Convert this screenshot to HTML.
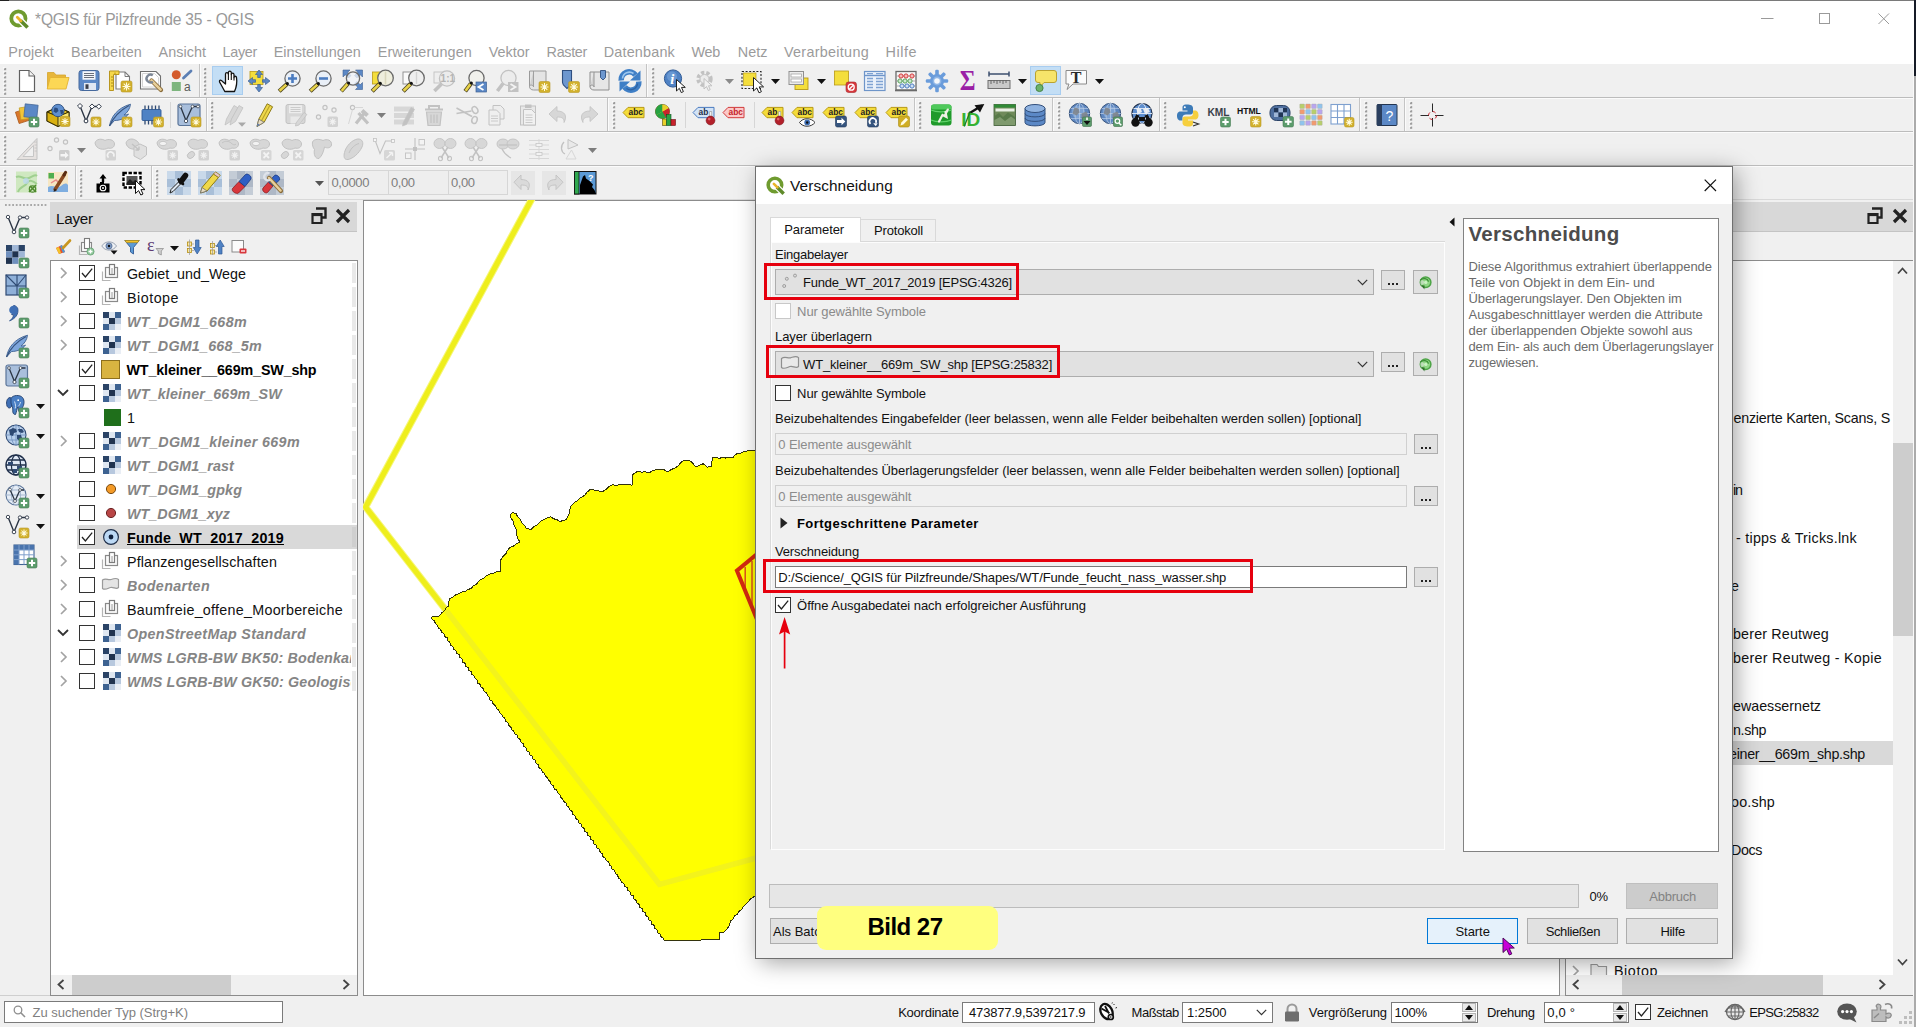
<!DOCTYPE html>
<html lang="de"><head><meta charset="utf-8"><title>QGIS</title>
<style>
html,body{margin:0;padding:0;}
html{overflow:hidden;background:#f0f0f0;}
body{width:1916px;height:1027px;overflow:hidden;background:#f0f0f0;position:relative;font-family:"Liberation Sans",sans-serif;}
div,svg{position:absolute;box-sizing:border-box;}
.t{white-space:pre;line-height:1;}
svg{overflow:visible;}
</style></head><body>
<div style="left:0px;top:0px;width:1916px;height:64px;background:#fff;"></div>
<div style="left:0px;top:0px;width:1916px;height:1px;background:#7a7a7a;"></div>
<div style="left:0px;top:0px;width:9px;height:1px;background:#222;"></div>
<svg style="left:9px;top:9px;" width="20" height="20" viewBox="0 0 20 20"><circle cx="9.4" cy="9.4" r="7.1" fill="none" stroke="#6f9b2f" stroke-width="3.8"/><path d="M10.5 10.5L19 19" stroke="#fff" stroke-width="6.2"/><path d="M11.5 11.5L18.6 18.6" stroke="#5f8a2a" stroke-width="3.6" stroke-linecap="butt"/><path d="M8.3 8.3L12 12" stroke="#e9b42a" stroke-width="2.8" stroke-linecap="round"/></svg>
<div class="t" style="left:35.00px;top:12px;font-size:15.6px;color:#999;letter-spacing:-0.179px;">*QGIS für Pilzfreunde 35 - QGIS</div>
<svg style="left:1761px;top:12px;" width="13" height="12" viewBox="0 0 13 12"><path d="M0 6.5H12.5" stroke="#9a9a9a" stroke-width="1" fill="none"/></svg>
<svg style="left:1819px;top:13px;" width="12" height="12" viewBox="0 0 12 12"><rect x="0.5" y="0.5" width="10" height="10" stroke="#9a9a9a" stroke-width="1" fill="none"/></svg>
<svg style="left:1878px;top:13px;" width="12" height="12" viewBox="0 0 12 12"><path d="M0.5 0.5L11 11M11 0.5L0.5 11" stroke="#9a9a9a" stroke-width="1" fill="none"/></svg>
<div class="t" style="left:8.30px;top:45px;font-size:14.4px;color:#9b9b9b;letter-spacing:0.112px;">Projekt</div>
<div class="t" style="left:71.00px;top:45px;font-size:14.4px;color:#9b9b9b;letter-spacing:0.135px;">Bearbeiten</div>
<div class="t" style="left:158.60px;top:45px;font-size:14.4px;color:#9b9b9b;letter-spacing:0.025px;">Ansicht</div>
<div class="t" style="left:222.50px;top:45px;font-size:14.4px;color:#9b9b9b;letter-spacing:-0.304px;">Layer</div>
<div class="t" style="left:273.70px;top:45px;font-size:14.4px;color:#9b9b9b;letter-spacing:0.064px;">Einstellungen</div>
<div class="t" style="left:377.70px;top:45px;font-size:14.4px;color:#9b9b9b;letter-spacing:0.111px;">Erweiterungen</div>
<div class="t" style="left:488.70px;top:45px;font-size:14.4px;color:#9b9b9b;">Vektor</div>
<div class="t" style="left:546.60px;top:45px;font-size:14.4px;color:#9b9b9b;letter-spacing:-0.335px;">Raster</div>
<div class="t" style="left:603.70px;top:45px;font-size:14.4px;color:#9b9b9b;letter-spacing:0.183px;">Datenbank</div>
<div class="t" style="left:691.40px;top:45px;font-size:14.4px;color:#9b9b9b;letter-spacing:-0.250px;">Web</div>
<div class="t" style="left:737.80px;top:45px;font-size:14.4px;color:#9b9b9b;letter-spacing:0.048px;">Netz</div>
<div class="t" style="left:784.00px;top:45px;font-size:14.4px;color:#9b9b9b;letter-spacing:0.278px;">Verarbeitung</div>
<div class="t" style="left:885.50px;top:45px;font-size:14.4px;color:#9b9b9b;letter-spacing:0.539px;">Hilfe</div>
<div style="left:0px;top:64px;width:1916px;height:136px;background:#f0f0f0;"></div>
<div style="left:0px;top:97px;width:1916px;height:1px;background:#bcbcbc;"></div>
<div style="left:0px;top:98px;width:1916px;height:1px;background:#fbfbfb;"></div>
<div style="left:0px;top:131px;width:1916px;height:1px;background:#bcbcbc;"></div>
<div style="left:0px;top:132px;width:1916px;height:1px;background:#fbfbfb;"></div>
<div style="left:0px;top:165px;width:1916px;height:1px;background:#bcbcbc;"></div>
<div style="left:0px;top:166px;width:1916px;height:1px;background:#fbfbfb;"></div>
<div style="left:0px;top:199px;width:1916px;height:1px;background:#d9d9d9;"></div>
<div style="left:0px;top:200px;width:50px;height:796px;background:#f0f0f0;"></div>
<div style="left:0px;top:995px;width:1916px;height:1px;background:#cfcfcf;"></div>
<div style="left:50px;top:202px;width:307px;height:30px;background:#d8d8d8;"></div>
<div style="left:50px;top:231px;width:307px;height:1px;background:#c4c4c4;"></div>
<div class="t" style="left:56.00px;top:211px;font-size:15.2px;color:#111;letter-spacing:-0.205px;">Layer</div>
<svg style="left:311px;top:207px;" width="16" height="18" viewBox="0 0 16 18"><path d="M5 1.5H14.5V10.5H11" fill="none" stroke="#222" stroke-width="2.4"/><path d="M1.5 7H10.5V16H1.5Z" fill="none" stroke="#222" stroke-width="2.2"/><path d="M1.5 7.6H10.5" stroke="#222" stroke-width="3"/></svg>
<svg style="left:335px;top:208px;" width="16" height="16" viewBox="0 0 16 16"><path d="M2 2L14 14M14 2L2 14" stroke="#222" stroke-width="3.2" fill="none"/></svg>
<div style="left:50px;top:260px;width:308px;height:735.5px;background:#fff;border:1px solid #8c8c8c;"></div>
<div style="left:77px;top:525px;width:280px;height:24px;background:#d9d9d9;"></div>
<svg style="left:60px;top:267px;" width="8" height="12" viewBox="0 0 8 12"><path d="M1 1L6 6L1 11" fill="none" stroke="#a3a3a3" stroke-width="1.7"/></svg>
<svg style="left:79px;top:265px;" width="16" height="16" viewBox="0 0 16 16"><rect x="0.5" y="0.5" width="15" height="15" fill="#fff" stroke="#333" stroke-width="1"/><path d="M3 8.0L6.4 12L13.2 3.6" fill="none" stroke="#222" stroke-width="1.3"/></svg>
<svg style="left:101px;top:263px;" width="18" height="19" viewBox="0 0 18 19"><path d="M1.5 8.5V17.5H9.5" fill="none" stroke="#b5b5b5" stroke-width="1.2"/><rect x="4.5" y="4.5" width="12" height="10" fill="#fafafa" stroke="#8a8a8a" stroke-width="1.2"/><rect x="8.5" y="1.5" width="5" height="10" fill="#fff" stroke="#7b7b7b" stroke-width="1.2"/><path d="M11 5V11" stroke="#9a9a9a" stroke-width="1"/></svg>
<div class="t" style="left:127.00px;top:267px;font-size:14.3px;color:#111;">Gebiet_und_Wege</div>
<svg style="left:60px;top:291px;" width="8" height="12" viewBox="0 0 8 12"><path d="M1 1L6 6L1 11" fill="none" stroke="#a3a3a3" stroke-width="1.7"/></svg>
<svg style="left:79px;top:289px;" width="16" height="16" viewBox="0 0 16 16"><rect x="0.5" y="0.5" width="15" height="15" fill="#fff" stroke="#333" stroke-width="1"/></svg>
<svg style="left:101px;top:287px;" width="18" height="19" viewBox="0 0 18 19"><path d="M1.5 8.5V17.5H9.5" fill="none" stroke="#b5b5b5" stroke-width="1.2"/><rect x="4.5" y="4.5" width="12" height="10" fill="#fafafa" stroke="#8a8a8a" stroke-width="1.2"/><rect x="8.5" y="1.5" width="5" height="10" fill="#fff" stroke="#7b7b7b" stroke-width="1.2"/><path d="M11 5V11" stroke="#9a9a9a" stroke-width="1"/></svg>
<div class="t" style="left:127.00px;top:291px;font-size:14.3px;color:#111;letter-spacing:0.500px;">Biotope</div>
<svg style="left:60px;top:315px;" width="8" height="12" viewBox="0 0 8 12"><path d="M1 1L6 6L1 11" fill="none" stroke="#a3a3a3" stroke-width="1.7"/></svg>
<svg style="left:79px;top:313px;" width="16" height="16" viewBox="0 0 16 16"><rect x="0.5" y="0.5" width="15" height="15" fill="#fff" stroke="#333" stroke-width="1"/></svg>
<svg style="left:103px;top:312px;" width="18" height="18" viewBox="0 0 18 18"><rect x="0" y="0" width="6" height="6" fill="#2a4366"/><rect x="6" y="0" width="6" height="6" fill="#dfe7f1"/><rect x="12" y="0" width="6" height="6" fill="#3d6291"/><rect x="0" y="6" width="6" height="6" fill="#dfe7f1"/><rect x="6" y="6" width="6" height="6" fill="#20334f"/><rect x="12" y="6" width="6" height="6" fill="#b7c8de"/><rect x="0" y="12" width="6" height="6" fill="#3d6291"/><rect x="6" y="12" width="6" height="6" fill="#b7c8de"/><rect x="12" y="12" width="6" height="6" fill="#e9eef5"/></svg>
<div class="t" style="left:127.00px;top:315px;font-size:14.3px;color:#858585;font-weight:700;font-style:italic;letter-spacing:0.331px;">WT_DGM1_668m</div>
<svg style="left:60px;top:339px;" width="8" height="12" viewBox="0 0 8 12"><path d="M1 1L6 6L1 11" fill="none" stroke="#a3a3a3" stroke-width="1.7"/></svg>
<svg style="left:79px;top:337px;" width="16" height="16" viewBox="0 0 16 16"><rect x="0.5" y="0.5" width="15" height="15" fill="#fff" stroke="#333" stroke-width="1"/></svg>
<svg style="left:103px;top:336px;" width="18" height="18" viewBox="0 0 18 18"><rect x="0" y="0" width="6" height="6" fill="#2a4366"/><rect x="6" y="0" width="6" height="6" fill="#dfe7f1"/><rect x="12" y="0" width="6" height="6" fill="#3d6291"/><rect x="0" y="6" width="6" height="6" fill="#dfe7f1"/><rect x="6" y="6" width="6" height="6" fill="#20334f"/><rect x="12" y="6" width="6" height="6" fill="#b7c8de"/><rect x="0" y="12" width="6" height="6" fill="#3d6291"/><rect x="6" y="12" width="6" height="6" fill="#b7c8de"/><rect x="12" y="12" width="6" height="6" fill="#e9eef5"/></svg>
<div class="t" style="left:127.00px;top:339px;font-size:14.3px;color:#858585;font-weight:700;font-style:italic;letter-spacing:0.219px;">WT_DGM1_668_5m</div>
<svg style="left:79px;top:361px;" width="16" height="16" viewBox="0 0 16 16"><rect x="0.5" y="0.5" width="15" height="15" fill="#fff" stroke="#333" stroke-width="1"/><path d="M3 8.0L6.4 12L13.2 3.6" fill="none" stroke="#222" stroke-width="1.3"/></svg>
<div style="left:101px;top:360px;width:19px;height:19px;background:#d9b441;border:1px solid #8c6f1e;"></div>
<div class="t" style="left:126.50px;top:363px;font-size:14.3px;color:#000;font-weight:700;letter-spacing:-0.136px;">WT_kleiner__669m_SW_shp</div>
<svg style="left:57px;top:389px;" width="12" height="8" viewBox="0 0 12 8"><path d="M1 1L6 6L11 1" fill="none" stroke="#333" stroke-width="1.8"/></svg>
<svg style="left:79px;top:385px;" width="16" height="16" viewBox="0 0 16 16"><rect x="0.5" y="0.5" width="15" height="15" fill="#fff" stroke="#333" stroke-width="1"/></svg>
<svg style="left:103px;top:384px;" width="18" height="18" viewBox="0 0 18 18"><rect x="0" y="0" width="6" height="6" fill="#2a4366"/><rect x="6" y="0" width="6" height="6" fill="#dfe7f1"/><rect x="12" y="0" width="6" height="6" fill="#3d6291"/><rect x="0" y="6" width="6" height="6" fill="#dfe7f1"/><rect x="6" y="6" width="6" height="6" fill="#20334f"/><rect x="12" y="6" width="6" height="6" fill="#b7c8de"/><rect x="0" y="12" width="6" height="6" fill="#3d6291"/><rect x="6" y="12" width="6" height="6" fill="#b7c8de"/><rect x="12" y="12" width="6" height="6" fill="#e9eef5"/></svg>
<div class="t" style="left:127.00px;top:387px;font-size:14.3px;color:#858585;font-weight:700;font-style:italic;letter-spacing:0.177px;">WT_kleiner_669m_SW</div>
<div style="left:104px;top:409px;width:17px;height:17px;background:#1f6f1b;"></div>
<div class="t" style="left:127.00px;top:411px;font-size:14.3px;color:#111;">1</div>
<svg style="left:60px;top:435px;" width="8" height="12" viewBox="0 0 8 12"><path d="M1 1L6 6L1 11" fill="none" stroke="#a3a3a3" stroke-width="1.7"/></svg>
<svg style="left:79px;top:433px;" width="16" height="16" viewBox="0 0 16 16"><rect x="0.5" y="0.5" width="15" height="15" fill="#fff" stroke="#333" stroke-width="1"/></svg>
<svg style="left:103px;top:432px;" width="18" height="18" viewBox="0 0 18 18"><rect x="0" y="0" width="6" height="6" fill="#2a4366"/><rect x="6" y="0" width="6" height="6" fill="#dfe7f1"/><rect x="12" y="0" width="6" height="6" fill="#3d6291"/><rect x="0" y="6" width="6" height="6" fill="#dfe7f1"/><rect x="6" y="6" width="6" height="6" fill="#20334f"/><rect x="12" y="6" width="6" height="6" fill="#b7c8de"/><rect x="0" y="12" width="6" height="6" fill="#3d6291"/><rect x="6" y="12" width="6" height="6" fill="#b7c8de"/><rect x="12" y="12" width="6" height="6" fill="#e9eef5"/></svg>
<div class="t" style="left:127.00px;top:435px;font-size:14.3px;color:#858585;font-weight:700;font-style:italic;letter-spacing:0.345px;">WT_DGM1_kleiner 669m</div>
<svg style="left:79px;top:457px;" width="16" height="16" viewBox="0 0 16 16"><rect x="0.5" y="0.5" width="15" height="15" fill="#fff" stroke="#333" stroke-width="1"/></svg>
<svg style="left:103px;top:456px;" width="18" height="18" viewBox="0 0 18 18"><rect x="0" y="0" width="6" height="6" fill="#2a4366"/><rect x="6" y="0" width="6" height="6" fill="#dfe7f1"/><rect x="12" y="0" width="6" height="6" fill="#3d6291"/><rect x="0" y="6" width="6" height="6" fill="#dfe7f1"/><rect x="6" y="6" width="6" height="6" fill="#20334f"/><rect x="12" y="6" width="6" height="6" fill="#b7c8de"/><rect x="0" y="12" width="6" height="6" fill="#3d6291"/><rect x="6" y="12" width="6" height="6" fill="#b7c8de"/><rect x="12" y="12" width="6" height="6" fill="#e9eef5"/></svg>
<div class="t" style="left:127.00px;top:459px;font-size:14.3px;color:#858585;font-weight:700;font-style:italic;letter-spacing:0.109px;">WT_DGM1_rast</div>
<svg style="left:79px;top:481px;" width="16" height="16" viewBox="0 0 16 16"><rect x="0.5" y="0.5" width="15" height="15" fill="#fff" stroke="#333" stroke-width="1"/></svg>
<svg style="left:104px;top:482px;" width="14" height="14" viewBox="0 0 14 14"><circle cx="7" cy="7" r="4.6" fill="#f39a27" stroke="#7a4a10" stroke-width="1"/></svg>
<div class="t" style="left:127.00px;top:483px;font-size:14.3px;color:#858585;font-weight:700;font-style:italic;letter-spacing:0.116px;">WT_DGM1_gpkg</div>
<svg style="left:79px;top:505px;" width="16" height="16" viewBox="0 0 16 16"><rect x="0.5" y="0.5" width="15" height="15" fill="#fff" stroke="#333" stroke-width="1"/></svg>
<svg style="left:104px;top:506px;" width="14" height="14" viewBox="0 0 14 14"><circle cx="7" cy="7" r="4.6" fill="#b84545" stroke="#6b2323" stroke-width="1"/></svg>
<div class="t" style="left:127.00px;top:507px;font-size:14.3px;color:#858585;font-weight:700;font-style:italic;letter-spacing:0.045px;">WT_DGM1_xyz</div>
<svg style="left:79px;top:529px;" width="16" height="16" viewBox="0 0 16 16"><rect x="0.5" y="0.5" width="15" height="15" fill="#fff" stroke="#333" stroke-width="1"/><path d="M3 8.0L6.4 12L13.2 3.6" fill="none" stroke="#222" stroke-width="1.3"/></svg>
<svg style="left:102px;top:528px;" width="18" height="18" viewBox="0 0 18 18"><circle cx="9" cy="9" r="7.4" fill="#bcd9f5" stroke="#1f2f4a" stroke-width="1.2"/><circle cx="9" cy="9" r="2.4" fill="#10213d"/></svg>
<div class="t" style="left:127.00px;top:531px;font-size:14.3px;color:#000;font-weight:700;letter-spacing:0.244px;text-decoration:underline;">Funde_WT_2017_2019</div>
<svg style="left:60px;top:555px;" width="8" height="12" viewBox="0 0 8 12"><path d="M1 1L6 6L1 11" fill="none" stroke="#a3a3a3" stroke-width="1.7"/></svg>
<svg style="left:79px;top:553px;" width="16" height="16" viewBox="0 0 16 16"><rect x="0.5" y="0.5" width="15" height="15" fill="#fff" stroke="#333" stroke-width="1"/></svg>
<svg style="left:101px;top:551px;" width="18" height="19" viewBox="0 0 18 19"><path d="M1.5 8.5V17.5H9.5" fill="none" stroke="#b5b5b5" stroke-width="1.2"/><rect x="4.5" y="4.5" width="12" height="10" fill="#fafafa" stroke="#8a8a8a" stroke-width="1.2"/><rect x="8.5" y="1.5" width="5" height="10" fill="#fff" stroke="#7b7b7b" stroke-width="1.2"/><path d="M11 5V11" stroke="#9a9a9a" stroke-width="1"/></svg>
<div class="t" style="left:127.00px;top:555px;font-size:14.3px;color:#111;letter-spacing:0.133px;">Pflanzengesellschaften</div>
<svg style="left:60px;top:579px;" width="8" height="12" viewBox="0 0 8 12"><path d="M1 1L6 6L1 11" fill="none" stroke="#a3a3a3" stroke-width="1.7"/></svg>
<svg style="left:79px;top:577px;" width="16" height="16" viewBox="0 0 16 16"><rect x="0.5" y="0.5" width="15" height="15" fill="#fff" stroke="#333" stroke-width="1"/></svg>
<svg style="left:101px;top:577px;" width="19" height="15" viewBox="0 0 19 15"><path d="M1.5 3C5 0.5 7 3.5 10 2.5S15 0.5 17.5 2.5V10.5C15 13 12.5 9.5 9.5 10.5S4 13.5 1.5 11.5Z" fill="#e4e4e4" stroke="#9a9a9a" stroke-width="1.2"/></svg>
<div class="t" style="left:127.00px;top:579px;font-size:14.3px;color:#858585;font-weight:700;font-style:italic;letter-spacing:0.355px;">Bodenarten</div>
<svg style="left:60px;top:603px;" width="8" height="12" viewBox="0 0 8 12"><path d="M1 1L6 6L1 11" fill="none" stroke="#a3a3a3" stroke-width="1.7"/></svg>
<svg style="left:79px;top:601px;" width="16" height="16" viewBox="0 0 16 16"><rect x="0.5" y="0.5" width="15" height="15" fill="#fff" stroke="#333" stroke-width="1"/></svg>
<svg style="left:101px;top:599px;" width="18" height="19" viewBox="0 0 18 19"><path d="M1.5 8.5V17.5H9.5" fill="none" stroke="#b5b5b5" stroke-width="1.2"/><rect x="4.5" y="4.5" width="12" height="10" fill="#fafafa" stroke="#8a8a8a" stroke-width="1.2"/><rect x="8.5" y="1.5" width="5" height="10" fill="#fff" stroke="#7b7b7b" stroke-width="1.2"/><path d="M11 5V11" stroke="#9a9a9a" stroke-width="1"/></svg>
<div class="t" style="left:127.00px;top:603px;font-size:14.3px;color:#111;letter-spacing:0.275px;">Baumfreie_offene_Moorbereiche</div>
<svg style="left:57px;top:629px;" width="12" height="8" viewBox="0 0 12 8"><path d="M1 1L6 6L11 1" fill="none" stroke="#333" stroke-width="1.8"/></svg>
<svg style="left:79px;top:625px;" width="16" height="16" viewBox="0 0 16 16"><rect x="0.5" y="0.5" width="15" height="15" fill="#fff" stroke="#333" stroke-width="1"/></svg>
<svg style="left:103px;top:624px;" width="18" height="18" viewBox="0 0 18 18"><rect x="0" y="0" width="6" height="6" fill="#2a4366"/><rect x="6" y="0" width="6" height="6" fill="#dfe7f1"/><rect x="12" y="0" width="6" height="6" fill="#3d6291"/><rect x="0" y="6" width="6" height="6" fill="#dfe7f1"/><rect x="6" y="6" width="6" height="6" fill="#20334f"/><rect x="12" y="6" width="6" height="6" fill="#b7c8de"/><rect x="0" y="12" width="6" height="6" fill="#3d6291"/><rect x="6" y="12" width="6" height="6" fill="#b7c8de"/><rect x="12" y="12" width="6" height="6" fill="#e9eef5"/></svg>
<div class="t" style="left:127.00px;top:627px;font-size:14.3px;color:#858585;font-weight:700;font-style:italic;letter-spacing:0.335px;">OpenStreetMap Standard</div>
<svg style="left:60px;top:651px;" width="8" height="12" viewBox="0 0 8 12"><path d="M1 1L6 6L1 11" fill="none" stroke="#a3a3a3" stroke-width="1.7"/></svg>
<svg style="left:79px;top:649px;" width="16" height="16" viewBox="0 0 16 16"><rect x="0.5" y="0.5" width="15" height="15" fill="#fff" stroke="#333" stroke-width="1"/></svg>
<svg style="left:103px;top:648px;" width="18" height="18" viewBox="0 0 18 18"><rect x="0" y="0" width="6" height="6" fill="#2a4366"/><rect x="6" y="0" width="6" height="6" fill="#dfe7f1"/><rect x="12" y="0" width="6" height="6" fill="#3d6291"/><rect x="0" y="6" width="6" height="6" fill="#dfe7f1"/><rect x="6" y="6" width="6" height="6" fill="#20334f"/><rect x="12" y="6" width="6" height="6" fill="#b7c8de"/><rect x="0" y="12" width="6" height="6" fill="#3d6291"/><rect x="6" y="12" width="6" height="6" fill="#b7c8de"/><rect x="12" y="12" width="6" height="6" fill="#e9eef5"/></svg>
<div class="t" style="left:127.00px;top:651px;font-size:14.3px;color:#858585;font-weight:700;font-style:italic;letter-spacing:0.184px;">WMS LGRB-BW BK50: Bodenkarte</div>
<svg style="left:60px;top:675px;" width="8" height="12" viewBox="0 0 8 12"><path d="M1 1L6 6L1 11" fill="none" stroke="#a3a3a3" stroke-width="1.7"/></svg>
<svg style="left:79px;top:673px;" width="16" height="16" viewBox="0 0 16 16"><rect x="0.5" y="0.5" width="15" height="15" fill="#fff" stroke="#333" stroke-width="1"/></svg>
<svg style="left:103px;top:672px;" width="18" height="18" viewBox="0 0 18 18"><rect x="0" y="0" width="6" height="6" fill="#2a4366"/><rect x="6" y="0" width="6" height="6" fill="#dfe7f1"/><rect x="12" y="0" width="6" height="6" fill="#3d6291"/><rect x="0" y="6" width="6" height="6" fill="#dfe7f1"/><rect x="6" y="6" width="6" height="6" fill="#20334f"/><rect x="12" y="6" width="6" height="6" fill="#b7c8de"/><rect x="0" y="12" width="6" height="6" fill="#3d6291"/><rect x="6" y="12" width="6" height="6" fill="#b7c8de"/><rect x="12" y="12" width="6" height="6" fill="#e9eef5"/></svg>
<div class="t" style="left:127.00px;top:675px;font-size:14.3px;color:#858585;font-weight:700;font-style:italic;letter-spacing:0.165px;">WMS LGRB-BW GK50: Geologische</div>
<div style="left:350.5px;top:261px;width:6.5px;height:24px;background:#fff;"></div>
<div style="left:351.5px;top:263px;width:4px;height:20px;background:#e9e9e9;"></div>
<div style="left:350.5px;top:285px;width:6.5px;height:24px;background:#fff;"></div>
<div style="left:351.5px;top:287px;width:4px;height:20px;background:#e9e9e9;"></div>
<div style="left:350.5px;top:309px;width:6.5px;height:24px;background:#fff;"></div>
<div style="left:351.5px;top:311px;width:4px;height:20px;background:#e9e9e9;"></div>
<div style="left:350.5px;top:333px;width:6.5px;height:24px;background:#fff;"></div>
<div style="left:351.5px;top:335px;width:4px;height:20px;background:#e9e9e9;"></div>
<div style="left:350.5px;top:357px;width:6.5px;height:24px;background:#fff;"></div>
<div style="left:351.5px;top:359px;width:4px;height:20px;background:#e9e9e9;"></div>
<div style="left:350.5px;top:381px;width:6.5px;height:24px;background:#fff;"></div>
<div style="left:351.5px;top:383px;width:4px;height:20px;background:#e9e9e9;"></div>
<div style="left:350.5px;top:405px;width:6.5px;height:24px;background:#fff;"></div>
<div style="left:351.5px;top:407px;width:4px;height:20px;background:#e9e9e9;"></div>
<div style="left:350.5px;top:429px;width:6.5px;height:24px;background:#fff;"></div>
<div style="left:351.5px;top:431px;width:4px;height:20px;background:#e9e9e9;"></div>
<div style="left:350.5px;top:453px;width:6.5px;height:24px;background:#fff;"></div>
<div style="left:351.5px;top:455px;width:4px;height:20px;background:#e9e9e9;"></div>
<div style="left:350.5px;top:477px;width:6.5px;height:24px;background:#fff;"></div>
<div style="left:351.5px;top:479px;width:4px;height:20px;background:#e9e9e9;"></div>
<div style="left:350.5px;top:501px;width:6.5px;height:24px;background:#fff;"></div>
<div style="left:351.5px;top:503px;width:4px;height:20px;background:#e9e9e9;"></div>
<div style="left:350.5px;top:525px;width:6.5px;height:24px;background:#d9d9d9;"></div>
<div style="left:351.5px;top:527px;width:4px;height:20px;background:#cfcfcf;"></div>
<div style="left:350.5px;top:549px;width:6.5px;height:24px;background:#fff;"></div>
<div style="left:351.5px;top:551px;width:4px;height:20px;background:#e9e9e9;"></div>
<div style="left:350.5px;top:573px;width:6.5px;height:24px;background:#fff;"></div>
<div style="left:351.5px;top:575px;width:4px;height:20px;background:#e9e9e9;"></div>
<div style="left:350.5px;top:597px;width:6.5px;height:24px;background:#fff;"></div>
<div style="left:351.5px;top:599px;width:4px;height:20px;background:#e9e9e9;"></div>
<div style="left:350.5px;top:621px;width:6.5px;height:24px;background:#fff;"></div>
<div style="left:351.5px;top:623px;width:4px;height:20px;background:#e9e9e9;"></div>
<div style="left:350.5px;top:645px;width:6.5px;height:24px;background:#fff;"></div>
<div style="left:351.5px;top:647px;width:4px;height:20px;background:#e9e9e9;"></div>
<div style="left:350.5px;top:669px;width:6.5px;height:24px;background:#fff;"></div>
<div style="left:351.5px;top:671px;width:4px;height:20px;background:#e9e9e9;"></div>
<div style="left:357px;top:261px;width:1px;height:734px;background:#8c8c8c;"></div>
<div style="left:358px;top:200px;width:5px;height:796px;background:#f0f0f0;"></div>
<div style="left:51px;top:975px;width:306px;height:19.5px;background:#f0f0f0;"></div>
<div style="left:72px;top:975px;width:159px;height:19.5px;background:#cdcdcd;"></div>
<svg style="left:57px;top:979px;" width="8" height="11" viewBox="0 0 8 11"><path d="M6.5 1L1.5 5.5L6.5 10" fill="none" stroke="#444" stroke-width="1.8"/></svg>
<svg style="left:342px;top:979px;" width="8" height="11" viewBox="0 0 8 11"><path d="M1.5 1L6.5 5.5L1.5 10" fill="none" stroke="#444" stroke-width="1.8"/></svg>
<svg style="left:4px;top:68px;" width="3" height="28" viewBox="0 0 3 28"><rect x="0" y="0.0" width="2.2" height="2.2" fill="#9c9c9c"/><rect x="-0.8" y="-0.8" width="1.4" height="1.4" fill="#fdfdfd"/><rect x="0" y="4.1" width="2.2" height="2.2" fill="#9c9c9c"/><rect x="-0.8" y="3.3" width="1.4" height="1.4" fill="#fdfdfd"/><rect x="0" y="8.2" width="2.2" height="2.2" fill="#9c9c9c"/><rect x="-0.8" y="7.4" width="1.4" height="1.4" fill="#fdfdfd"/><rect x="0" y="12.3" width="2.2" height="2.2" fill="#9c9c9c"/><rect x="-0.8" y="11.5" width="1.4" height="1.4" fill="#fdfdfd"/><rect x="0" y="16.4" width="2.2" height="2.2" fill="#9c9c9c"/><rect x="-0.8" y="15.6" width="1.4" height="1.4" fill="#fdfdfd"/><rect x="0" y="20.5" width="2.2" height="2.2" fill="#9c9c9c"/><rect x="-0.8" y="19.7" width="1.4" height="1.4" fill="#fdfdfd"/><rect x="0" y="24.6" width="2.2" height="2.2" fill="#9c9c9c"/><rect x="-0.8" y="23.8" width="1.4" height="1.4" fill="#fdfdfd"/></svg>
<svg style="left:15px;top:69px;" width="24" height="24" viewBox="0 0 24 24"><path d="M4.5 1.5H14L19.5 7V22.5H4.5Z" fill="#fff" stroke="#5f5f5f" stroke-width="1.2"/><path d="M14 1.5V7H19.5" fill="#f3f3f3" stroke="#5f5f5f" stroke-width="1.1"/></svg>
<svg style="left:46px;top:69px;" width="24" height="24" viewBox="0 0 24 24"><path d="M1.5 3.5H8L10 6H19.5V19.5H1.5Z" fill="#e7b63a" stroke="#d6a42c" stroke-width="0.8"/><path d="M1.2 20L4.2 8.5H23L20 20Z" fill="#fcd755" stroke="#e3b231" stroke-width="0.9"/></svg>
<svg style="left:77px;top:69px;" width="24" height="24" viewBox="0 0 24 24"><rect x="2" y="1.5" width="20" height="20" rx="2.4" fill="#5b88c6" stroke="#46699d" stroke-width="1"/><rect x="5.5" y="2.2" width="13" height="8.5" fill="#f4f6fa"/><path d="M7 4.5H17M7 6.5H17M7 8.5H17" stroke="#59606c" stroke-width="0.9"/><rect x="7" y="14" width="12" height="7" fill="#dfe7f3"/><rect x="8.5" y="15.3" width="3" height="4.6" fill="#3b3f4a"/></svg>
<svg style="left:108px;top:69px;" width="24" height="24" viewBox="0 0 24 24"><path d="M8 3H17L21.5 7.5V20H8Z" fill="#fff" stroke="#7b7b7b" stroke-width="1.1"/><path d="M17 3V7.5H21.5" fill="none" stroke="#7b7b7b" stroke-width="1"/><path d="M1.5 2H11V5.5H5.5V21.5H1.5Z" fill="#f6d84a" stroke="#b9961e" stroke-width="1"/><path d="M3 8H5M3 11H5M3 14H5M3 17H5M7 3.5V5" stroke="#9a7a14" stroke-width="0.8"/><rect x="13" y="12" width="11" height="11" rx="1.6" fill="#d2b12c" stroke="#b8992a" stroke-width="0.6"/><path d="M18.5 13.54V21.46M14.54 17.5H22.46M15.7 14.7L21.3 20.3M21.3 14.7L15.7 20.3" stroke="#fffbe0" stroke-width="1.05" fill="none"/></svg>
<svg style="left:139px;top:69px;" width="24" height="24" viewBox="0 0 24 24"><path d="M1.5 2.5H17L21.5 7V20H1.5Z" fill="#fff" stroke="#6f6f6f" stroke-width="1.1"/><path d="M3.5 4.5H15.5L19.5 8.5V18H3.5Z" fill="none" stroke="#c9c9c9" stroke-width="0.8"/><path d="M12.5 11.5L22 21" stroke="#8a6c3a" stroke-width="4.2" stroke-linecap="round"/><path d="M12.5 11.5L21.6 20.6" stroke="#e8cf9a" stroke-width="2.6" stroke-linecap="round"/><path d="M13.8 6.4A3.9 3.9 0 1 0 13.9 12.6" fill="none" stroke="#7d8796" stroke-width="2.4"/></svg>
<svg style="left:170px;top:69px;" width="24" height="24" viewBox="0 0 24 24"><circle cx="6.3" cy="5.8" r="4.5" fill="#d45b2c"/><path d="M13.5 9L21 2" stroke="#5c7fb4" stroke-width="2.8" stroke-linecap="round"/><rect x="1.8" y="13" width="9" height="9" fill="#7db57e"/><text x="14" y="22" font-family="Liberation Sans, sans-serif" font-size="12" fill="#5a5a5a">a</text></svg>
<div style="left:199px;top:64px;width:1px;height:33px;background:#c4c4c4;"></div>
<div style="left:200px;top:64px;width:1px;height:33px;background:#fbfbfb;"></div>
<svg style="left:204px;top:68px;" width="3" height="28" viewBox="0 0 3 28"><rect x="0" y="0.0" width="2.2" height="2.2" fill="#9c9c9c"/><rect x="-0.8" y="-0.8" width="1.4" height="1.4" fill="#fdfdfd"/><rect x="0" y="4.1" width="2.2" height="2.2" fill="#9c9c9c"/><rect x="-0.8" y="3.3" width="1.4" height="1.4" fill="#fdfdfd"/><rect x="0" y="8.2" width="2.2" height="2.2" fill="#9c9c9c"/><rect x="-0.8" y="7.4" width="1.4" height="1.4" fill="#fdfdfd"/><rect x="0" y="12.3" width="2.2" height="2.2" fill="#9c9c9c"/><rect x="-0.8" y="11.5" width="1.4" height="1.4" fill="#fdfdfd"/><rect x="0" y="16.4" width="2.2" height="2.2" fill="#9c9c9c"/><rect x="-0.8" y="15.6" width="1.4" height="1.4" fill="#fdfdfd"/><rect x="0" y="20.5" width="2.2" height="2.2" fill="#9c9c9c"/><rect x="-0.8" y="19.7" width="1.4" height="1.4" fill="#fdfdfd"/><rect x="0" y="24.6" width="2.2" height="2.2" fill="#9c9c9c"/><rect x="-0.8" y="23.8" width="1.4" height="1.4" fill="#fdfdfd"/></svg>
<div style="left:212px;top:66px;width:31px;height:29px;background:#c3def5;border:1px solid #a8cdf0;"></div>
<svg style="left:216px;top:69px;" width="24" height="24" viewBox="0 0 24 24"><path d="M6.5 12.5C4.5 10 2.5 11.5 4 13.8L8.8 22.5H18.5C20.5 18 21.2 13 20.5 8.5 20.3 6.8 18.2 6.8 18 8.5V5.5C17.8 3.6 15.5 3.6 15.3 5.5V3.5C15 1.6 12.6 1.6 12.4 3.5V5C12 3 9.6 3.2 9.5 5V15Z" fill="#fff" stroke="#111" stroke-width="1.3" stroke-linejoin="round"/><path d="M12.4 5V11M15.3 5.5V11M18 8.5V11.5" stroke="#111" stroke-width="1.1"/></svg>
<svg style="left:247px;top:69px;" width="24" height="24" viewBox="0 0 24 24"><rect x="3" y="2.5" width="13" height="13" fill="#f4de3c" stroke="#b89a16" stroke-width="0.8"/><path d="M12 1L15.5 5.5H13.3V8.5H10.7V5.5H8.5ZM12 23L8.5 18.5H10.7V15.5H13.3V18.5H15.5ZM1 12L5.5 8.5V10.7H8.5V13.3H5.5V15.5ZM23 12L18.5 15.5V13.3H15.5V10.7H18.5V8.5Z" fill="#5b88c6" stroke="#3f6293" stroke-width="0.7"/></svg>
<svg style="left:277px;top:69px;" width="24" height="24" viewBox="0 0 24 24"><path d="M10.0 15.0L2.2 22.2" stroke="#4d4420" stroke-width="4.2" stroke-linecap="butt"/><path d="M9.4 15.6L2.6 21.8" stroke="#e8d34a" stroke-width="2.6" stroke-linecap="butt"/><circle cx="15.5" cy="9.5" r="7.6" fill="#e9eff7" stroke="#6a6a6a" stroke-width="1.3"/><circle cx="10.4" cy="14.6" r="1.5" fill="#111"/><path d="M15.5 5V14M11 9.5H20" stroke="#4b7cc0" stroke-width="2.6"/></svg>
<svg style="left:308px;top:69px;" width="24" height="24" viewBox="0 0 24 24"><path d="M10.0 15.0L2.2 22.2" stroke="#4d4420" stroke-width="4.2" stroke-linecap="butt"/><path d="M9.4 15.6L2.6 21.8" stroke="#e8d34a" stroke-width="2.6" stroke-linecap="butt"/><circle cx="15.5" cy="9.5" r="7.6" fill="#e9eff7" stroke="#6a6a6a" stroke-width="1.3"/><circle cx="10.4" cy="14.6" r="1.5" fill="#111"/><path d="M11 9.5H20" stroke="#4b7cc0" stroke-width="2.6"/></svg>
<svg style="left:339px;top:69px;" width="24" height="24" viewBox="0 0 24 24"><path d="M4 1H11L8.7 3.3 12 6.6 9.6 9 6.3 5.7 4 8ZM23.5 1V8L21.2 5.7 17.9 9 15.5 6.6 18.8 3.3 16.5 1ZM23.5 20.5H16.5L18.8 18.2 15.5 14.9 17.9 12.5 21.2 15.8 23.5 13.5Z" fill="#5b88c6" stroke="#3f6293" stroke-width="0.6"/><path d="M9.2 14.3L2.2 22.2" stroke="#4d4420" stroke-width="4.2" stroke-linecap="butt"/><path d="M8.6 14.9L2.6 21.8" stroke="#e8d34a" stroke-width="2.6" stroke-linecap="butt"/><circle cx="14" cy="9.5" r="6.6" fill="rgba(240,244,250,0.75)" stroke="#6a6a6a" stroke-width="1.3"/><circle cx="9.6" cy="13.9" r="1.5" fill="#111"/></svg>
<svg style="left:370px;top:69px;" width="24" height="24" viewBox="0 0 24 24"><rect x="2.5" y="3" width="10" height="12" fill="#f4de3c" stroke="#b89a16" stroke-width="0.8"/><path d="M9.9 14.6L2.2 22.2" stroke="#4d4420" stroke-width="4.2" stroke-linecap="butt"/><path d="M9.3 15.2L2.6 21.8" stroke="#e8d34a" stroke-width="2.6" stroke-linecap="butt"/><circle cx="15.5" cy="9" r="7.8" fill="#efeedd" stroke="#6a6a6a" stroke-width="1.3"/><circle cx="10.3" cy="14.2" r="1.5" fill="#111"/><path d="M15.5 2.5V15.5" stroke="#d9d6bb" stroke-width="1.6"/></svg>
<svg style="left:401px;top:69px;" width="24" height="24" viewBox="0 0 24 24"><rect x="2" y="3" width="11" height="12" fill="#fafafa" stroke="#8a8a8a" stroke-width="0.9"/><path d="M9.9 14.6L2.2 22.2" stroke="#4d4420" stroke-width="4.2" stroke-linecap="butt"/><path d="M9.3 15.2L2.6 21.8" stroke="#e8d34a" stroke-width="2.6" stroke-linecap="butt"/><circle cx="15.5" cy="9" r="7.8" fill="#efefef" stroke="#6a6a6a" stroke-width="1.3"/><circle cx="10.3" cy="14.2" r="1.5" fill="#111"/><path d="M15.5 3V15" stroke="#d4d4d4" stroke-width="1.4"/></svg>
<svg style="left:432px;top:69px;" width="24" height="24" viewBox="0 0 24 24"><rect x="2" y="3" width="9" height="11" fill="#eee" stroke="#c2c2c2" stroke-width="0.9"/><path d="M9.5 15.0L2.4 22" stroke="#c2c2c2" stroke-width="3.6"/><circle cx="15" cy="9.5" r="7.6" fill="#ececec" stroke="#c2c2c2" stroke-width="1.3"/><text x="8.6" y="13.2" font-family="Liberation Sans, sans-serif" font-size="10" font-weight="700" fill="#b4b4b4">1:1</text></svg>
<svg style="left:463px;top:69px;" width="24" height="24" viewBox="0 0 24 24"><path d="M8.0 14.5L2.2 22.2" stroke="#4d4420" stroke-width="4.2" stroke-linecap="butt"/><path d="M7.4 15.1L2.6 21.8" stroke="#e8d34a" stroke-width="2.6" stroke-linecap="butt"/><circle cx="13.5" cy="9" r="7.6" fill="#f1f1ec" stroke="#6a6a6a" stroke-width="1.3"/><circle cx="8.4" cy="14.1" r="1.5" fill="#111"/><rect x="13" y="13" width="10.5" height="10" fill="#5b88c6" stroke="#3f6293" stroke-width="0.7"/><path d="M20.5 15L15.5 18L20.5 21" fill="none" stroke="#fff" stroke-width="1.8"/></svg>
<svg style="left:495px;top:69px;" width="24" height="24" viewBox="0 0 24 24"><path d="M8.0 14.5L2.4 22" stroke="#c2c2c2" stroke-width="3.6"/><circle cx="13.5" cy="9" r="7.6" fill="#ececec" stroke="#c2c2c2" stroke-width="1.3"/><rect x="13" y="13" width="10.5" height="10" fill="#c2c2c2"/><path d="M15.5 15L20.5 18L15.5 21" fill="none" stroke="#f3f3f3" stroke-width="1.8"/></svg>
<svg style="left:526px;top:69px;" width="24" height="24" viewBox="0 0 24 24"><path d="M3.5 2H20V21H7.5C5 21 3.5 19.5 3.5 17.5Z" fill="#e4e4e4" stroke="#9a9a9a" stroke-width="1"/><path d="M3.5 17.5C3.5 15.5 7.5 15.5 7.5 18V2" fill="#cfcfcf" stroke="#9a9a9a" stroke-width="0.9"/><rect x="13" y="12.5" width="11" height="11" rx="1.6" fill="#d2b12c" stroke="#b8992a" stroke-width="0.6"/><path d="M18.5 14.04V21.96M14.54 18.0H22.46M15.7 15.2L21.3 20.8M21.3 15.2L15.7 20.8" stroke="#fffbe0" stroke-width="1.05" fill="none"/></svg>
<svg style="left:557px;top:69px;" width="24" height="24" viewBox="0 0 24 24"><path d="M5.5 1.5H14.5V13.5C14.5 16 12 17.5 10 19.5 8 17.5 5.5 16 5.5 13.5Z" fill="#6d97cf" stroke="#2f4f80" stroke-width="1.1"/><rect x="11.5" y="12.5" width="11" height="11" rx="1.6" fill="#d2b12c" stroke="#b8992a" stroke-width="0.6"/><path d="M17.0 14.04V21.96M13.04 18.0H20.96M14.2 15.2L19.8 20.8M19.8 15.2L14.2 20.8" stroke="#fffbe0" stroke-width="1.05" fill="none"/></svg>
<svg style="left:588px;top:69px;" width="24" height="24" viewBox="0 0 24 24"><path d="M2 3H21V21H6C3.6 21 2 19.5 2 17.5Z" fill="#e6e6e6" stroke="#8f8f8f" stroke-width="1"/><path d="M2 17.5C2 15.5 6 15.5 6 18V3" fill="#d3d3d3" stroke="#8f8f8f" stroke-width="0.9"/><path d="M12.5 1.5H17.5V8.5L15 11 12.5 8.5Z" fill="#6d97cf" stroke="#2f4f80" stroke-width="0.9"/></svg>
<svg style="left:618px;top:69px;" width="24" height="24" viewBox="0 0 24 24"><path d="M3.2 11.5A8 8 0 0 1 17.5 6" fill="none" stroke="#3f7fc6" stroke-width="5.6"/><path d="M22.5 1.5V11.5H12Z" fill="#3f7fc6"/><path d="M20.8 12.5A8 8 0 0 1 6.5 18" fill="none" stroke="#3f7fc6" stroke-width="5.6"/><path d="M1.5 22.5V12.5H12Z" fill="#3f7fc6"/><path d="M4.5 9.5A7 7 0 0 1 15.5 4.5" fill="none" stroke="#9cc6ee" stroke-width="1.6"/><path d="M19.5 14.5A7 7 0 0 1 8.5 19.5" fill="none" stroke="#2f63a3" stroke-width="1.4"/></svg>
<div style="left:646px;top:64px;width:1px;height:33px;background:#c4c4c4;"></div>
<div style="left:647px;top:64px;width:1px;height:33px;background:#fbfbfb;"></div>
<svg style="left:652px;top:68px;" width="3" height="28" viewBox="0 0 3 28"><rect x="0" y="0.0" width="2.2" height="2.2" fill="#9c9c9c"/><rect x="-0.8" y="-0.8" width="1.4" height="1.4" fill="#fdfdfd"/><rect x="0" y="4.1" width="2.2" height="2.2" fill="#9c9c9c"/><rect x="-0.8" y="3.3" width="1.4" height="1.4" fill="#fdfdfd"/><rect x="0" y="8.2" width="2.2" height="2.2" fill="#9c9c9c"/><rect x="-0.8" y="7.4" width="1.4" height="1.4" fill="#fdfdfd"/><rect x="0" y="12.3" width="2.2" height="2.2" fill="#9c9c9c"/><rect x="-0.8" y="11.5" width="1.4" height="1.4" fill="#fdfdfd"/><rect x="0" y="16.4" width="2.2" height="2.2" fill="#9c9c9c"/><rect x="-0.8" y="15.6" width="1.4" height="1.4" fill="#fdfdfd"/><rect x="0" y="20.5" width="2.2" height="2.2" fill="#9c9c9c"/><rect x="-0.8" y="19.7" width="1.4" height="1.4" fill="#fdfdfd"/><rect x="0" y="24.6" width="2.2" height="2.2" fill="#9c9c9c"/><rect x="-0.8" y="23.8" width="1.4" height="1.4" fill="#fdfdfd"/></svg>
<svg style="left:663px;top:69px;" width="24" height="24" viewBox="0 0 24 24"><circle cx="10" cy="9.5" r="8.6" fill="#4f82c4" stroke="#2f5a96" stroke-width="1"/><circle cx="9" cy="7.5" r="5" fill="#7ba6dc" opacity="0.6"/><text x="7.3" y="15.2" font-family="Liberation Serif, serif" font-size="14.5" font-style="italic" font-weight="700" fill="#fff">i</text><path d="M13.5 10.5V22L16.3 19.3 18.3 23.6 20.4 22.6 18.5 18.4H22.3Z" fill="#fff" stroke="#222" stroke-width="1"/></svg>
<svg style="left:694px;top:69px;" width="24" height="24" viewBox="0 0 24 24"><circle cx="10.5" cy="10" r="6.4" fill="none" stroke="#c2c2c2" stroke-width="3.6" stroke-dasharray="3.2 2"/><circle cx="10.5" cy="10" r="4.5" fill="#ececec" stroke="#c2c2c2" stroke-width="1"/><path d="M10 9.5V20L12.5 17.6 14.3 21.5 16.2 20.6 14.5 16.8H18Z" fill="#f1f1f1" stroke="#c2c2c2" stroke-width="1"/></svg>
<svg style="left:725px;top:79px;" width="9" height="5" viewBox="0 0 9 5"><path d="M0 0H9L4.5 5Z" fill="#8a8a8a"/></svg>
<svg style="left:741px;top:69px;" width="24" height="24" viewBox="0 0 24 24"><rect x="1" y="2.5" width="19" height="17" fill="none" stroke="#222" stroke-width="1.1" stroke-dasharray="2 1.6"/><rect x="2.5" y="4" width="12.5" height="12.5" fill="#f4de3c" stroke="#b89a16" stroke-width="0.7"/><path d="M12.5 8.5V22L15.8 18.9 18 23.8 20.4 22.7 18.2 17.9H22.6Z" fill="#fff" stroke="#222" stroke-width="1"/></svg>
<svg style="left:771px;top:79px;" width="9" height="5" viewBox="0 0 9 5"><path d="M0 0H9L4.5 5Z" fill="#111"/></svg>
<svg style="left:787px;top:69px;" width="24" height="24" viewBox="0 0 24 24"><rect x="8" y="9" width="13" height="11.5" fill="#f4de3c" stroke="#b89a16" stroke-width="0.9"/><rect x="2" y="2.5" width="14.5" height="13" fill="#ececec" stroke="#8f8f8f" stroke-width="1"/><rect x="4" y="5" width="10.5" height="3" fill="#fff" stroke="#9a9a9a" stroke-width="0.7"/><rect x="4" y="10" width="10.5" height="3" fill="#fff" stroke="#9a9a9a" stroke-width="0.7"/></svg>
<svg style="left:817px;top:79px;" width="9" height="5" viewBox="0 0 9 5"><path d="M0 0H9L4.5 5Z" fill="#111"/></svg>
<svg style="left:833px;top:69px;" width="24" height="24" viewBox="0 0 24 24"><rect x="1.5" y="2" width="14" height="14" fill="#f4de3c" stroke="#b89a16" stroke-width="0.8"/><rect x="13" y="13" width="10.5" height="10.5" rx="2.4" fill="#d8373c" stroke="#a3282c" stroke-width="0.6"/><circle cx="18.2" cy="18.2" r="3" fill="none" stroke="#fff" stroke-width="1.3"/><path d="M16.2 20.3L20.3 16.2" stroke="#fff" stroke-width="1.3"/></svg>
<svg style="left:863px;top:69px;" width="24" height="24" viewBox="0 0 24 24"><rect x="1.5" y="2.5" width="20.5" height="19" fill="#eaf1fa" stroke="#6e95c9" stroke-width="1.2"/><path d="M1.5 6.5H22" stroke="#6e95c9" stroke-width="1.4"/><path d="M4 9.5H10M13 9.5H20M4 12.5H10M13 12.5H20M4 15.5H10M13 15.5H20M4 18.5H10M13 18.5H20M4 4.6H10M13 4.6H20" stroke="#7fa3d3" stroke-width="1.3"/></svg>
<svg style="left:894px;top:69px;" width="24" height="24" viewBox="0 0 24 24"><rect x="2" y="2.5" width="20" height="18.5" fill="#f8f8f8" stroke="#6a6a6a" stroke-width="1.3"/><path d="M1 21.5H23" stroke="#6a6a6a" stroke-width="1.6"/><path d="M2 7H22M2 12H22M2 17H22" stroke="#9a9a9a" stroke-width="0.8"/><circle cx="7" cy="7" r="2.1" fill="#f5b7b7" stroke="#d23a3a" stroke-width="1"/><circle cx="12" cy="7" r="2.1" fill="#f5b7b7" stroke="#d23a3a" stroke-width="1"/><circle cx="18" cy="7" r="2.1" fill="#f5b7b7" stroke="#d23a3a" stroke-width="1"/><circle cx="6" cy="12" r="2.1" fill="#cfe8cf" stroke="#57a35c" stroke-width="1"/><circle cx="11" cy="12" r="2.1" fill="#cfe8cf" stroke="#57a35c" stroke-width="1"/><circle cx="16" cy="12" r="2.1" fill="#cfe8cf" stroke="#57a35c" stroke-width="1"/><circle cx="8" cy="17" r="2.1" fill="#cfdff2" stroke="#4b7cc0" stroke-width="1"/><circle cx="13" cy="17" r="2.1" fill="#cfdff2" stroke="#4b7cc0" stroke-width="1"/><circle cx="18" cy="17" r="2.1" fill="#cfdff2" stroke="#4b7cc0" stroke-width="1"/></svg>
<svg style="left:925px;top:69px;" width="24" height="24" viewBox="0 0 24 24"><rect x="10.2" y="0.8" width="3.6" height="6" rx="1.2" fill="#6a9cdb" transform="rotate(0 12 12)"/><rect x="10.2" y="0.8" width="3.6" height="6" rx="1.2" fill="#6a9cdb" transform="rotate(45 12 12)"/><rect x="10.2" y="0.8" width="3.6" height="6" rx="1.2" fill="#6a9cdb" transform="rotate(90 12 12)"/><rect x="10.2" y="0.8" width="3.6" height="6" rx="1.2" fill="#6a9cdb" transform="rotate(135 12 12)"/><rect x="10.2" y="0.8" width="3.6" height="6" rx="1.2" fill="#6a9cdb" transform="rotate(180 12 12)"/><rect x="10.2" y="0.8" width="3.6" height="6" rx="1.2" fill="#6a9cdb" transform="rotate(225 12 12)"/><rect x="10.2" y="0.8" width="3.6" height="6" rx="1.2" fill="#6a9cdb" transform="rotate(270 12 12)"/><rect x="10.2" y="0.8" width="3.6" height="6" rx="1.2" fill="#6a9cdb" transform="rotate(315 12 12)"/><circle cx="12" cy="12" r="7" fill="#6a9cdb"/><circle cx="12" cy="12" r="4.4" fill="#8fb6e6"/><circle cx="12" cy="12" r="2.8" fill="#f4f7fb"/></svg>
<svg style="left:956px;top:69px;" width="24" height="24" viewBox="0 0 24 24"><text x="4.6" y="21.4" transform="scale(0.82,1)" font-family="Liberation Serif, serif" font-size="29.5" font-weight="700" fill="#9b1fa6">Σ</text></svg>
<svg style="left:987px;top:69px;" width="24" height="24" viewBox="0 0 24 24"><path d="M2 5H22M2 2.5V7.5M22 2.5V7.5" stroke="#3d4f6e" stroke-width="1.5" fill="none"/><rect x="1" y="11.5" width="22" height="8" fill="#c9c9c9" stroke="#6f6f6f" stroke-width="1"/><path d="M4 11.5V15M7 11.5V14M10 11.5V15M13 11.5V14M16 11.5V15M19 11.5V14" stroke="#5a5a5a" stroke-width="0.9"/></svg>
<svg style="left:1018px;top:79px;" width="9" height="5" viewBox="0 0 9 5"><path d="M0 0H9L4.5 5Z" fill="#111"/></svg>
<div style="left:1030px;top:66px;width:31px;height:29px;background:#c3def5;border:1px solid #a8cdf0;"></div>
<svg style="left:1034px;top:69px;" width="24" height="24" viewBox="0 0 24 24"><path d="M4 1.5H20A2.5 2.5 0 0 1 22.5 4V11A2.5 2.5 0 0 1 20 13.5H10L6 18V13.5H4A2.5 2.5 0 0 1 1.5 11V4A2.5 2.5 0 0 1 4 1.5Z" fill="#f6e46a" stroke="#b9a232" stroke-width="1"/><circle cx="5.5" cy="19" r="3.6" fill="#6bb36b" stroke="#3f7d3f" stroke-width="0.9"/></svg>
<svg style="left:1064px;top:69px;" width="24" height="24" viewBox="0 0 24 24"><path d="M2 1.5H22.5V15H9L3 20.5 5 15H2Z" fill="#fbfbfb" stroke="#8a8a8a" stroke-width="1"/><text x="6.8" y="13.6" font-family="Liberation Serif, serif" font-size="16" font-weight="700" fill="#2a2a2a">T</text></svg>
<svg style="left:1095px;top:79px;" width="9" height="5" viewBox="0 0 9 5"><path d="M0 0H9L4.5 5Z" fill="#111"/></svg>
<svg style="left:4px;top:102px;" width="3" height="28" viewBox="0 0 3 28"><rect x="0" y="0.0" width="2.2" height="2.2" fill="#9c9c9c"/><rect x="-0.8" y="-0.8" width="1.4" height="1.4" fill="#fdfdfd"/><rect x="0" y="4.1" width="2.2" height="2.2" fill="#9c9c9c"/><rect x="-0.8" y="3.3" width="1.4" height="1.4" fill="#fdfdfd"/><rect x="0" y="8.2" width="2.2" height="2.2" fill="#9c9c9c"/><rect x="-0.8" y="7.4" width="1.4" height="1.4" fill="#fdfdfd"/><rect x="0" y="12.3" width="2.2" height="2.2" fill="#9c9c9c"/><rect x="-0.8" y="11.5" width="1.4" height="1.4" fill="#fdfdfd"/><rect x="0" y="16.4" width="2.2" height="2.2" fill="#9c9c9c"/><rect x="-0.8" y="15.6" width="1.4" height="1.4" fill="#fdfdfd"/><rect x="0" y="20.5" width="2.2" height="2.2" fill="#9c9c9c"/><rect x="-0.8" y="19.7" width="1.4" height="1.4" fill="#fdfdfd"/><rect x="0" y="24.6" width="2.2" height="2.2" fill="#9c9c9c"/><rect x="-0.8" y="23.8" width="1.4" height="1.4" fill="#fdfdfd"/></svg>
<svg style="left:15px;top:103px;" width="24" height="24" viewBox="0 0 24 24"><rect x="2" y="7" width="12" height="12" transform="rotate(-18 8 13)" fill="#d9772b" stroke="#a85517" stroke-width="0.7"/><rect x="5" y="4" width="12" height="12" transform="rotate(-8 11 10)" fill="#f0c53a" stroke="#c29a1c" stroke-width="0.7"/><rect x="9.5" y="1.5" width="13" height="13" transform="rotate(6 16 8)" fill="#5b88c6" stroke="#3f6293" stroke-width="0.7"/><rect x="14" y="14" width="10" height="10" rx="1.6" fill="#5c9c6c" stroke="#4a7d57" stroke-width="0.6"/><path d="M19.0 15.8V22.2M15.8 19.0H22.2" stroke="#fff" stroke-width="2" fill="none"/></svg>
<svg style="left:46px;top:103px;" width="24" height="24" viewBox="0 0 24 24"><path d="M1 9L12 4 23 9V18L12 23.5 1 18Z" fill="#f0ca1e" stroke="#3a3206" stroke-width="1.1"/><path d="M12 13.5V23.5M1 9L12 13.5 23 9" fill="none" stroke="#3a3206" stroke-width="1"/><path d="M12 13.5L23 9V18L12 23.5Z" fill="#f7e46a"/><path d="M1 9L12 13.5V23.5L1 18Z" fill="#d9b010"/><path d="M1 9L12 4 23 9V18L12 23.5 1 18ZM12 13.5V23.5M1 9L12 13.5 23 9" fill="none" stroke="#3a3206" stroke-width="1"/><circle cx="12" cy="7.5" r="6.2" fill="#5f8fcf" stroke="#2f5080" stroke-width="0.9"/><path d="M8.5 4.5l3 0.5 1 3-2.5 2-2.5-1.5zM14 7l3 0 0.5 3-2.5 1.5z" fill="#2b4d80"/><rect x="14" y="13.5" width="10" height="10" rx="1.6" fill="#d2b12c" stroke="#b8992a" stroke-width="0.6"/><path d="M19.0 14.9V22.1M15.4 18.5H22.6M16.5 16.0L21.5 21.0M21.5 16.0L16.5 21.0" stroke="#fffbe0" stroke-width="1.05" fill="none"/></svg>
<svg style="left:77px;top:103px;" width="24" height="24" viewBox="0 0 24 24"><path d="M3 3L9 18L15 3.5H22" fill="none" stroke="#2c3645" stroke-width="1.4"/><rect x="1.2" y="1.2" width="3.6" height="3.6" transform="rotate(45 3 3)" fill="#fff" stroke="#2c3645" stroke-width="0.9"/><rect x="13.2" y="1.7" width="3.6" height="3.6" transform="rotate(45 15 3.5)" fill="#fff" stroke="#2c3645" stroke-width="0.9"/><rect x="20" y="1.7" width="3.6" height="3.6" transform="rotate(45 21.8 3.5)" fill="#fff" stroke="#2c3645" stroke-width="0.9"/><circle cx="9" cy="18" r="1.9" fill="#fff" stroke="#2c3645" stroke-width="1"/><rect x="14" y="14" width="10" height="10" rx="1.6" fill="#d2b12c" stroke="#b8992a" stroke-width="0.6"/><path d="M19.0 15.4V22.6M15.4 19.0H22.6M16.5 16.5L21.5 21.5M21.5 16.5L16.5 21.5" stroke="#fffbe0" stroke-width="1.05" fill="none"/></svg>
<svg style="left:108px;top:103px;" width="24" height="24" viewBox="0 0 24 24"><path d="M1.5 23C3 14 9 5 22.5 1.2 22 6 19 10 16 12 18 12 19.5 11.5 20.5 11 17 16 11 17.5 6.5 17.5Z" fill="#7ea6dc" stroke="#3f6293" stroke-width="0.9"/><path d="M1.5 23C5 15 11 8 21 2.5" fill="none" stroke="#35527d" stroke-width="1.1"/><rect x="14" y="14" width="10" height="10" rx="1.6" fill="#d2b12c" stroke="#b8992a" stroke-width="0.6"/><path d="M19.0 15.4V22.6M15.4 19.0H22.6M16.5 16.5L21.5 21.5M21.5 16.5L16.5 21.5" stroke="#fffbe0" stroke-width="1.05" fill="none"/></svg>
<svg style="left:140px;top:103px;" width="24" height="24" viewBox="0 0 24 24"><rect x="2" y="6.5" width="19" height="11" rx="1" fill="#4f82c4" stroke="#2f5a96" stroke-width="0.9"/><path d="M5 2.5V6.5M8.5 2.5V6.5M12 2.5V6.5M15.5 2.5V6.5M19 2.5V6.5M5 17.5V21.5M8.5 17.5V21.5M12 17.5V21.5" stroke="#2f4a73" stroke-width="1.3"/><rect x="13.5" y="14" width="10" height="10" rx="1.6" fill="#d2b12c" stroke="#b8992a" stroke-width="0.6"/><path d="M18.5 15.4V22.6M14.9 19.0H22.1M16.0 16.5L21.0 21.5M21.0 16.5L16.0 21.5" stroke="#fffbe0" stroke-width="1.05" fill="none"/></svg>
<div style="left:170px;top:102px;width:1px;height:26px;background:#d6d6d6;"></div>
<svg style="left:177px;top:103px;" width="24" height="24" viewBox="0 0 24 24"><rect x="1" y="1" width="22" height="21.5" rx="2" fill="#a9bfdc" stroke="#5b7599" stroke-width="1.2"/><path d="M3.5 3.5L9 17.5L15.5 3.5H21" fill="none" stroke="#2c3645" stroke-width="1.3"/><circle cx="3.5" cy="3.5" r="1.4" fill="#fff" stroke="#2c3645" stroke-width="0.7"/><circle cx="15.5" cy="3.5" r="1.4" fill="#fff" stroke="#2c3645" stroke-width="0.7"/><circle cx="21" cy="3.5" r="1.4" fill="#fff" stroke="#2c3645" stroke-width="0.7"/><circle cx="9" cy="18" r="1.7" fill="#fff" stroke="#2c3645" stroke-width="0.8"/><rect x="14" y="14" width="10" height="10" rx="1.6" fill="#d2b12c" stroke="#b8992a" stroke-width="0.6"/><path d="M19.0 15.4V22.6M15.4 19.0H22.6M16.5 16.5L21.5 21.5M21.5 16.5L16.5 21.5" stroke="#fffbe0" stroke-width="1.05" fill="none"/></svg>
<div style="left:206px;top:98px;width:1px;height:33px;background:#c4c4c4;"></div>
<div style="left:207px;top:98px;width:1px;height:33px;background:#fbfbfb;"></div>
<svg style="left:211px;top:102px;" width="3" height="28" viewBox="0 0 3 28"><rect x="0" y="0.0" width="2.2" height="2.2" fill="#9c9c9c"/><rect x="-0.8" y="-0.8" width="1.4" height="1.4" fill="#fdfdfd"/><rect x="0" y="4.1" width="2.2" height="2.2" fill="#9c9c9c"/><rect x="-0.8" y="3.3" width="1.4" height="1.4" fill="#fdfdfd"/><rect x="0" y="8.2" width="2.2" height="2.2" fill="#9c9c9c"/><rect x="-0.8" y="7.4" width="1.4" height="1.4" fill="#fdfdfd"/><rect x="0" y="12.3" width="2.2" height="2.2" fill="#9c9c9c"/><rect x="-0.8" y="11.5" width="1.4" height="1.4" fill="#fdfdfd"/><rect x="0" y="16.4" width="2.2" height="2.2" fill="#9c9c9c"/><rect x="-0.8" y="15.6" width="1.4" height="1.4" fill="#fdfdfd"/><rect x="0" y="20.5" width="2.2" height="2.2" fill="#9c9c9c"/><rect x="-0.8" y="19.7" width="1.4" height="1.4" fill="#fdfdfd"/><rect x="0" y="24.6" width="2.2" height="2.2" fill="#9c9c9c"/><rect x="-0.8" y="23.8" width="1.4" height="1.4" fill="#fdfdfd"/></svg>
<svg style="left:223px;top:103px;" width="24" height="24" viewBox="0 0 24 24"><path d="M2 22L3.5 16 11 2.5 15 4.8 7.5 18.5Z" fill="#d7d7d7" stroke="#c2c2c2" stroke-width="0.8"/><path d="M7 22L8.5 16 16 2.5 20 4.8 12.5 18.5Z" fill="#d7d7d7" stroke="#c2c2c2" stroke-width="0.8"/><path d="M15 19.5H23L19 23.8Z" fill="#a9a9a9"/></svg>
<svg style="left:253px;top:103px;" width="24" height="24" viewBox="0 0 24 24"><path d="M4 23.5L5.8 16.2 14.2 0.8 19.6 3.8 11.2 19.2Z" fill="#efd84a" stroke="#8c7a17" stroke-width="1"/><path d="M8.5 17.7L16.9 2.3" stroke="#b9a22a" stroke-width="1.1"/><path d="M4 23.5L5.8 16.2 11.2 19.2Z" fill="#e9dcc0" stroke="#6e6e6e" stroke-width="0.8"/><path d="M4 23.5L4.7 20.6 6.8 21.8Z" fill="#5b7bb0"/></svg>
<svg style="left:284px;top:103px;" width="24" height="24" viewBox="0 0 24 24"><rect x="2" y="1.5" width="19" height="19" rx="2" fill="#d7d7d7" stroke="#c2c2c2" stroke-width="1"/><rect x="5" y="2.2" width="13" height="8" fill="#ededed"/><path d="M6.5 4.5H16.5M6.5 6.5H16.5M6.5 8.5H16.5" stroke="#c2c2c2" stroke-width="0.8"/><rect x="6.5" y="13.5" width="11" height="7" fill="#e9e9e9"/><path d="M12 20L20 9.5 22.8 11.5 15 22 11.5 23Z" fill="#d7d7d7" stroke="#c2c2c2" stroke-width="0.8"/></svg>
<svg style="left:315px;top:103px;" width="24" height="24" viewBox="0 0 24 24"><circle cx="3.5" cy="14" r="2.1" fill="none" stroke="#c2c2c2" stroke-width="1.2"/><circle cx="10" cy="4.5" r="2.1" fill="none" stroke="#c2c2c2" stroke-width="1.2"/><circle cx="19" cy="7" r="2.1" fill="none" stroke="#c2c2c2" stroke-width="1.2"/><rect x="12.5" y="13.5" width="10.5" height="10.5" rx="1.6" fill="#d2d2d2"/><path d="M17.75 15.285V22.215M14.285 18.75H21.215M15.3 16.3L20.2 21.2M20.2 16.3L15.3 21.2" stroke="#f1f1f1" stroke-width="1.2" fill="none"/></svg>
<svg style="left:347px;top:103px;" width="24" height="24" viewBox="0 0 24 24"><circle cx="5.5" cy="4.5" r="2.1" fill="none" stroke="#c2c2c2" stroke-width="1.1"/><path d="M5.5 6.5L1.5 21M7.5 4.5H16" stroke="#d7d7d7" stroke-width="1"/><path d="M9 20.5L17 10.5M11.5 10L21 20.5" stroke="#c2c2c2" stroke-width="3.2"/><path d="M15 7.5L20.5 12.5" stroke="#c2c2c2" stroke-width="4"/></svg>
<svg style="left:377px;top:113px;" width="9" height="5" viewBox="0 0 9 5"><path d="M0 0H9L4.5 5Z" fill="#7d7d7d"/></svg>
<svg style="left:393px;top:103px;" width="24" height="24" viewBox="0 0 24 24"><rect x="1" y="3.5" width="20" height="5" fill="#d7d7d7"/><rect x="1" y="10" width="20" height="5" fill="#d7d7d7"/><rect x="1" y="16.5" width="20" height="5" fill="#d7d7d7"/><path d="M10 20L18 4.5 21.5 6.3 13.5 21.5 9.5 23Z" fill="#c2c2c2" stroke="#c4c4c4" stroke-width="0.7"/></svg>
<svg style="left:422px;top:103px;" width="24" height="24" viewBox="0 0 24 24"><path d="M3 6.5H21M7 6.5V3H17V6.5" fill="none" stroke="#c2c2c2" stroke-width="2"/><path d="M4.5 9H19.5L18 22.5H6Z" fill="#d7d7d7" stroke="#c2c2c2" stroke-width="1.2"/><path d="M9 11.5V20M12 11.5V20M15 11.5V20" stroke="#c2c2c2" stroke-width="1.2"/></svg>
<svg style="left:455px;top:103px;" width="24" height="24" viewBox="0 0 24 24"><path d="M1.5 5L17 13.5M1.5 10.5L16.5 8" stroke="#c2c2c2" stroke-width="1.6" fill="none"/><ellipse cx="20" cy="7" rx="2.6" ry="3.6" transform="rotate(-30 20 7)" fill="none" stroke="#c2c2c2" stroke-width="1.5"/><ellipse cx="19.5" cy="17" rx="2.6" ry="3.6" transform="rotate(20 19.5 17)" fill="none" stroke="#c2c2c2" stroke-width="1.5"/></svg>
<svg style="left:485px;top:103px;" width="24" height="24" viewBox="0 0 24 24"><path d="M8 2.5H15.5L19 6V16H8Z" fill="#ededed" stroke="#c2c2c2" stroke-width="1"/><path d="M4 7H11.5L15 10.5V22H4Z" fill="#efefef" stroke="#c2c2c2" stroke-width="1"/><path d="M6 13H13M6 15.5H13M6 18H13" stroke="#c2c2c2" stroke-width="0.8"/></svg>
<svg style="left:517px;top:103px;" width="24" height="24" viewBox="0 0 24 24"><rect x="3.5" y="3" width="15" height="19" fill="#e8e8e8" stroke="#c2c2c2" stroke-width="1"/><rect x="8" y="1.5" width="6.5" height="3.5" fill="#c2c2c2"/><path d="M6.5 6.5H14.5L18.5 10.5V22H6.5Z" fill="#f1f1f1" stroke="#c2c2c2" stroke-width="1"/><path d="M8.5 12H15.5M8.5 14.5H15.5M8.5 17H15.5M8.5 19.5H15.5" stroke="#c2c2c2" stroke-width="0.8"/></svg>
<svg style="left:547px;top:103px;" width="24" height="24" viewBox="0 0 24 24"><path d="M10 3.5V8C18 8 20.5 13 17 19.5 17.5 15.5 15.5 14 10 14V18.5L2 11Z" fill="#d7d7d7" stroke="#c2c2c2" stroke-width="0.8"/></svg>
<svg style="left:578px;top:103px;" width="24" height="24" viewBox="0 0 24 24"><path d="M12 3.5V8C4 8 1.5 13 5 19.5 4.5 15.5 6.5 14 12 14V18.5L20 11Z" fill="#d7d7d7" stroke="#c2c2c2" stroke-width="0.8"/></svg>
<div style="left:607px;top:98px;width:1px;height:33px;background:#c4c4c4;"></div>
<div style="left:608px;top:98px;width:1px;height:33px;background:#fbfbfb;"></div>
<svg style="left:613px;top:102px;" width="3" height="28" viewBox="0 0 3 28"><rect x="0" y="0.0" width="2.2" height="2.2" fill="#9c9c9c"/><rect x="-0.8" y="-0.8" width="1.4" height="1.4" fill="#fdfdfd"/><rect x="0" y="4.1" width="2.2" height="2.2" fill="#9c9c9c"/><rect x="-0.8" y="3.3" width="1.4" height="1.4" fill="#fdfdfd"/><rect x="0" y="8.2" width="2.2" height="2.2" fill="#9c9c9c"/><rect x="-0.8" y="7.4" width="1.4" height="1.4" fill="#fdfdfd"/><rect x="0" y="12.3" width="2.2" height="2.2" fill="#9c9c9c"/><rect x="-0.8" y="11.5" width="1.4" height="1.4" fill="#fdfdfd"/><rect x="0" y="16.4" width="2.2" height="2.2" fill="#9c9c9c"/><rect x="-0.8" y="15.6" width="1.4" height="1.4" fill="#fdfdfd"/><rect x="0" y="20.5" width="2.2" height="2.2" fill="#9c9c9c"/><rect x="-0.8" y="19.7" width="1.4" height="1.4" fill="#fdfdfd"/><rect x="0" y="24.6" width="2.2" height="2.2" fill="#9c9c9c"/><rect x="-0.8" y="23.8" width="1.4" height="1.4" fill="#fdfdfd"/></svg>
<svg style="left:622px;top:103px;" width="24" height="24" viewBox="0 0 24 24"><path d="M6 4.4H22V14.700000000000001H6L1 9.55Z" fill="#f4dc3a" stroke="#b89a16" stroke-width="1"/><text x="6.5" y="12.100000000000001" font-family="Liberation Sans, sans-serif" font-size="8.4" font-weight="700" fill="#222">abc</text></svg>
<svg style="left:654px;top:103px;" width="24" height="24" viewBox="0 0 24 24"><circle cx="8.5" cy="8.5" r="7" fill="#e8cf2a" stroke="#3a3206" stroke-width="0.7"/><path d="M8.5 8.5V1.5A7 7 0 0 0 2.4 12Z" fill="#27a343"/><path d="M8.5 8.5L2.4 12A7 7 0 0 0 14.6 12Z" fill="#27a343"/><path d="M8.5 8.5L14.6 5A7 7 0 0 1 12 14.6Z" fill="#c8232c"/><path d="M8.5 8.5V1.5A7 7 0 0 1 14.6 5Z" fill="#e8cf2a"/><rect x="8.5" y="16" width="4" height="6.5" fill="#e8cf2a" stroke="#5a4d08" stroke-width="0.6"/><rect x="12.5" y="11.5" width="4.5" height="11" fill="#27a343" stroke="#114d1f" stroke-width="0.6"/><rect x="17" y="16.5" width="4.5" height="6" fill="#c8232c" stroke="#6a0f14" stroke-width="0.6"/></svg>
<div style="left:685px;top:102px;width:1px;height:26px;background:#d6d6d6;"></div>
<svg style="left:692px;top:103px;" width="24" height="24" viewBox="0 0 24 24"><path d="M6 4.4H22V14.700000000000001H6L1 9.55Z" fill="#d3e3f6" stroke="#4b7cc0" stroke-width="1"/><text x="6.5" y="12.100000000000001" font-family="Liberation Sans, sans-serif" font-size="8.4" font-weight="700" fill="#1f2f4a">ab</text><path d="M17.7 8.5H19.7V15.5H17.7Z" fill="#fff" stroke="#8a8a8a" stroke-width="0.6"/><circle cx="18.5" cy="17.5" r="4.4" fill="#b3202a" stroke="#7d141b" stroke-width="0.6"/><circle cx="17.2" cy="16.1" r="1.3" fill="#e0656c"/></svg>
<svg style="left:722px;top:103px;" width="24" height="24" viewBox="0 0 24 24"><path d="M6 4.4H22V14.700000000000001H6L1 9.55Z" fill="#fbc9c9" stroke="#d23a3a" stroke-width="1"/><text x="6.5" y="12.100000000000001" font-family="Liberation Sans, sans-serif" font-size="8.4" font-weight="700" fill="#c42229">abc</text></svg>
<div style="left:754px;top:102px;width:1px;height:26px;background:#d6d6d6;"></div>
<svg style="left:761px;top:103px;" width="24" height="24" viewBox="0 0 24 24"><path d="M6 4.4H22V14.700000000000001H6L1 9.55Z" fill="#f4dc3a" stroke="#b89a16" stroke-width="1"/><text x="6.5" y="12.100000000000001" font-family="Liberation Sans, sans-serif" font-size="8.4" font-weight="700" fill="#222">ab</text><path d="M17.7 8.5H19.7V15.5H17.7Z" fill="#fff" stroke="#8a8a8a" stroke-width="0.6"/><circle cx="18.5" cy="17.5" r="4.4" fill="#b3202a" stroke="#7d141b" stroke-width="0.6"/><circle cx="17.2" cy="16.1" r="1.3" fill="#e0656c"/></svg>
<svg style="left:791px;top:103px;" width="24" height="24" viewBox="0 0 24 24"><path d="M6 4.4H22V14.700000000000001H6L1 9.55Z" fill="#f4dc3a" stroke="#b89a16" stroke-width="1"/><text x="6.5" y="12.100000000000001" font-family="Liberation Sans, sans-serif" font-size="8.4" font-weight="700" fill="#222">abc</text><path d="M8.5 19.5C12 14.5 20 14.5 24 19.5 20 24.5 12 24.5 8.5 19.5Z" fill="#fff" stroke="#222" stroke-width="0.9"/><circle cx="16.2" cy="19.5" r="2.9" fill="#3f6fb5"/><circle cx="16.2" cy="19.5" r="1.2" fill="#111"/></svg>
<svg style="left:822px;top:103px;" width="24" height="24" viewBox="0 0 24 24"><path d="M6 4.4H22V14.700000000000001H6L1 9.55Z" fill="#f4dc3a" stroke="#b89a16" stroke-width="1"/><text x="6.5" y="12.100000000000001" font-family="Liberation Sans, sans-serif" font-size="8.4" font-weight="700" fill="#222">abc</text><rect x="13.5" y="13" width="11" height="11" rx="1.8" fill="#36557f" stroke="#233a5c" stroke-width="0.6"/><path d="M15 17H19.5V14.8L23.3 18.5 19.5 22.2V20H15Z" fill="#fff"/></svg>
<svg style="left:854px;top:103px;" width="24" height="24" viewBox="0 0 24 24"><path d="M6 4.4H22V14.700000000000001H6L1 9.55Z" fill="#f4dc3a" stroke="#b89a16" stroke-width="1"/><text x="6.5" y="12.100000000000001" font-family="Liberation Sans, sans-serif" font-size="8.4" font-weight="700" fill="#222">abc</text><rect x="13.5" y="13" width="11" height="11" rx="1.8" fill="#36557f" stroke="#233a5c" stroke-width="0.6"/><path d="M16.5 20.8A3.3 3.3 0 1 1 21.8 19.8" fill="none" stroke="#fff" stroke-width="1.7"/><path d="M19.2 20.3H23.6L21.8 23.2Z" fill="#fff"/></svg>
<svg style="left:885px;top:103px;" width="24" height="24" viewBox="0 0 24 24"><path d="M6 4.4H22V14.700000000000001H6L1 9.55Z" fill="#f4dc3a" stroke="#b89a16" stroke-width="1"/><text x="6.5" y="12.100000000000001" font-family="Liberation Sans, sans-serif" font-size="8.4" font-weight="700" fill="#222">abc</text><rect x="13.5" y="13" width="11" height="11" rx="1.8" fill="#d0ae24" stroke="#a88a12" stroke-width="0.6"/><path d="M15.5 22.5L16.3 19.5 21 14.8 23 16.8 18.3 21.5Z" fill="#fffbe0"/></svg>
<div style="left:914px;top:98px;width:1px;height:33px;background:#c4c4c4;"></div>
<div style="left:915px;top:98px;width:1px;height:33px;background:#fbfbfb;"></div>
<svg style="left:919px;top:102px;" width="3" height="28" viewBox="0 0 3 28"><rect x="0" y="0.0" width="2.2" height="2.2" fill="#9c9c9c"/><rect x="-0.8" y="-0.8" width="1.4" height="1.4" fill="#fdfdfd"/><rect x="0" y="4.1" width="2.2" height="2.2" fill="#9c9c9c"/><rect x="-0.8" y="3.3" width="1.4" height="1.4" fill="#fdfdfd"/><rect x="0" y="8.2" width="2.2" height="2.2" fill="#9c9c9c"/><rect x="-0.8" y="7.4" width="1.4" height="1.4" fill="#fdfdfd"/><rect x="0" y="12.3" width="2.2" height="2.2" fill="#9c9c9c"/><rect x="-0.8" y="11.5" width="1.4" height="1.4" fill="#fdfdfd"/><rect x="0" y="16.4" width="2.2" height="2.2" fill="#9c9c9c"/><rect x="-0.8" y="15.6" width="1.4" height="1.4" fill="#fdfdfd"/><rect x="0" y="20.5" width="2.2" height="2.2" fill="#9c9c9c"/><rect x="-0.8" y="19.7" width="1.4" height="1.4" fill="#fdfdfd"/><rect x="0" y="24.6" width="2.2" height="2.2" fill="#9c9c9c"/><rect x="-0.8" y="23.8" width="1.4" height="1.4" fill="#fdfdfd"/></svg>
<svg style="left:930px;top:103px;" width="24" height="24" viewBox="0 0 24 24"><rect x="1" y="1.5" width="20.5" height="21" rx="3" fill="#1f9a2b"/><path d="M1 7C6 9.5 16 9.5 21.5 7M1 17C6 19.5 16 19.5 21.5 17" fill="none" stroke="#5fd16a" stroke-width="1.1"/><rect x="1" y="1.5" width="20.5" height="5" rx="2.5" fill="#4fc95b"/><path d="M9 18.5L12.5 12 16.5 14 15.5 8.8M14.6 13L17.8 6.6" stroke="#f0f0e6" stroke-width="2.2" fill="none" stroke-linecap="round"/></svg>
<svg style="left:961px;top:103px;" width="24" height="24" viewBox="0 0 24 24"><path d="M8 10.5L21 2.5" stroke="#111" stroke-width="2.4" fill="none"/><path d="M23.3 1L13.5 2.2 19 9.6Z" fill="#111"/><text x="0.3" y="22.6" font-family="Liberation Sans, sans-serif" font-size="19" font-weight="700" fill="#35b233">ID</text><path d="M3.2 23.5L9.2 8.5" stroke="#1f7f1d" stroke-width="1.3"/></svg>
<svg style="left:993px;top:103px;" width="24" height="24" viewBox="0 0 24 24"><rect x="1" y="1.5" width="21.5" height="21" fill="#6f8a5a" stroke="#3c5a33" stroke-width="0.8"/><rect x="1" y="1.5" width="21.5" height="3" fill="#2f8a36"/><rect x="2.5" y="5.5" width="19" height="3" fill="#e9efe4"/><path d="M1.5 22V13L6 10 10 14 15 9.5 22 14V22Z" fill="#587a49"/><path d="M1.5 22V17L7 14 12 18 18 13.5 22 16.5V22Z" fill="#7f9a6e"/></svg>
<svg style="left:1023px;top:103px;" width="24" height="24" viewBox="0 0 24 24"><path d="M2 5.5V19.5C2 24 22 24 22 19.5V5.5Z" fill="#5b88c6" stroke="#33507d" stroke-width="1"/><ellipse cx="12" cy="5.5" rx="10" ry="4" fill="#8fb2e0" stroke="#33507d" stroke-width="1"/><path d="M2 10.5C2 15 22 15 22 10.5M2 15C2 19.5 22 19.5 22 15" fill="none" stroke="#33507d" stroke-width="1"/></svg>
<div style="left:1052px;top:98px;width:1px;height:33px;background:#c4c4c4;"></div>
<div style="left:1053px;top:98px;width:1px;height:33px;background:#fbfbfb;"></div>
<svg style="left:1058px;top:102px;" width="3" height="28" viewBox="0 0 3 28"><rect x="0" y="0.0" width="2.2" height="2.2" fill="#9c9c9c"/><rect x="-0.8" y="-0.8" width="1.4" height="1.4" fill="#fdfdfd"/><rect x="0" y="4.1" width="2.2" height="2.2" fill="#9c9c9c"/><rect x="-0.8" y="3.3" width="1.4" height="1.4" fill="#fdfdfd"/><rect x="0" y="8.2" width="2.2" height="2.2" fill="#9c9c9c"/><rect x="-0.8" y="7.4" width="1.4" height="1.4" fill="#fdfdfd"/><rect x="0" y="12.3" width="2.2" height="2.2" fill="#9c9c9c"/><rect x="-0.8" y="11.5" width="1.4" height="1.4" fill="#fdfdfd"/><rect x="0" y="16.4" width="2.2" height="2.2" fill="#9c9c9c"/><rect x="-0.8" y="15.6" width="1.4" height="1.4" fill="#fdfdfd"/><rect x="0" y="20.5" width="2.2" height="2.2" fill="#9c9c9c"/><rect x="-0.8" y="19.7" width="1.4" height="1.4" fill="#fdfdfd"/><rect x="0" y="24.6" width="2.2" height="2.2" fill="#9c9c9c"/><rect x="-0.8" y="23.8" width="1.4" height="1.4" fill="#fdfdfd"/></svg>
<svg style="left:1068px;top:103px;" width="24" height="24" viewBox="0 0 24 24"><circle cx="11.5" cy="10.5" r="10.2" fill="#5d86bf" stroke="#3a557d" stroke-width="1"/><circle cx="10.0" cy="9.0" r="6.3" fill="#86a9d8" opacity="0.8"/><ellipse cx="11.5" cy="10.5" rx="4.6" ry="10.2" fill="none" stroke="#b7cbe6" stroke-width="0.8"/><path d="M1.3000000000000007 10.5H21.7M11.5 0.3000000000000007V20.7M2.8 5.4H20.2M2.8 15.6H20.2" stroke="#b7cbe6" stroke-width="0.8" fill="none"/><path d="M6.5 4.5l4 1 1 4-3 3-4-2zM13.5 10.5l5-2 2 5-4 5-3-3z" fill="#7f858c" opacity="0.9"/><rect x="14.5" y="14" width="9" height="9.5" rx="1.3" fill="#5c9c6c" stroke="#3f6f4b" stroke-width="0.6"/><path d="M15.5 18H22.5L19 22Z" fill="#111"/><path d="M19 14.5V17" stroke="#fff" stroke-width="1.6"/></svg>
<svg style="left:1099px;top:103px;" width="24" height="24" viewBox="0 0 24 24"><circle cx="11.5" cy="10.5" r="10.2" fill="#5d86bf" stroke="#3a557d" stroke-width="1"/><circle cx="10.0" cy="9.0" r="6.3" fill="#86a9d8" opacity="0.8"/><ellipse cx="11.5" cy="10.5" rx="4.6" ry="10.2" fill="none" stroke="#b7cbe6" stroke-width="0.8"/><path d="M1.3000000000000007 10.5H21.7M11.5 0.3000000000000007V20.7M2.8 5.4H20.2M2.8 15.6H20.2" stroke="#b7cbe6" stroke-width="0.8" fill="none"/><path d="M6.5 4.5l4 1 1 4-3 3-4-2zM13.5 10.5l5-2 2 5-4 5-3-3z" fill="#7f858c" opacity="0.9"/><rect x="14.5" y="14" width="9" height="9.5" rx="1.3" fill="#5c9c6c" stroke="#3f6f4b" stroke-width="0.6"/><circle cx="18.4" cy="18.1" r="2.3" fill="none" stroke="#fff" stroke-width="1.2"/><path d="M20 20L22.3 22.3" stroke="#fff" stroke-width="1.4"/></svg>
<svg style="left:1130px;top:103px;" width="24" height="24" viewBox="0 0 24 24"><circle cx="12" cy="10.5" r="10" fill="#5f8fcf" stroke="#1f2f4a" stroke-width="1.2"/><ellipse cx="12" cy="10.5" rx="4.5" ry="10" fill="none" stroke="#e5edf8" stroke-width="0.9"/><path d="M2 10.5H22M3.5 5.5H20.5M3.5 15H20.5" stroke="#e5edf8" stroke-width="0.9"/><path d="M6 5l5 1 1 3-4 2zM13 6l5-1 2 4-5 2z" fill="#f5f5f5" opacity="0.9"/><path d="M8 12L5 17.5M16 12L19 17.5" stroke="#111" stroke-width="3.6"/><circle cx="5.5" cy="19.5" r="4.2" fill="#111"/><circle cx="18.5" cy="19.5" r="4.2" fill="#111"/><rect x="9" y="14" width="6" height="4" fill="#111"/></svg>
<div style="left:1159px;top:98px;width:1px;height:33px;background:#c4c4c4;"></div>
<div style="left:1160px;top:98px;width:1px;height:33px;background:#fbfbfb;"></div>
<svg style="left:1164px;top:102px;" width="3" height="28" viewBox="0 0 3 28"><rect x="0" y="0.0" width="2.2" height="2.2" fill="#9c9c9c"/><rect x="-0.8" y="-0.8" width="1.4" height="1.4" fill="#fdfdfd"/><rect x="0" y="4.1" width="2.2" height="2.2" fill="#9c9c9c"/><rect x="-0.8" y="3.3" width="1.4" height="1.4" fill="#fdfdfd"/><rect x="0" y="8.2" width="2.2" height="2.2" fill="#9c9c9c"/><rect x="-0.8" y="7.4" width="1.4" height="1.4" fill="#fdfdfd"/><rect x="0" y="12.3" width="2.2" height="2.2" fill="#9c9c9c"/><rect x="-0.8" y="11.5" width="1.4" height="1.4" fill="#fdfdfd"/><rect x="0" y="16.4" width="2.2" height="2.2" fill="#9c9c9c"/><rect x="-0.8" y="15.6" width="1.4" height="1.4" fill="#fdfdfd"/><rect x="0" y="20.5" width="2.2" height="2.2" fill="#9c9c9c"/><rect x="-0.8" y="19.7" width="1.4" height="1.4" fill="#fdfdfd"/><rect x="0" y="24.6" width="2.2" height="2.2" fill="#9c9c9c"/><rect x="-0.8" y="23.8" width="1.4" height="1.4" fill="#fdfdfd"/></svg>
<svg style="left:1176px;top:103px;" width="24" height="24" viewBox="0 0 24 24"><path d="M11 1.5C6.5 1.5 6.5 3.5 6.5 5V7.5H11.5V8.5H4.5C1.5 8.5 1 11 1 13S1.8 17.5 4.5 17.5H6.5V14.5C6.5 12.5 8 11.5 10 11.5H14.5C16.3 11.5 17 10.3 17 8.8V5C17 2.5 14.5 1.5 11 1.5Z" fill="#3d7bb8"/><circle cx="8.8" cy="4.3" r="1" fill="#fff"/><path d="M12.5 23.5C17 23.5 17 21.5 17 20V17.5H12V16.5H19C22 16.5 22.5 14 22.5 12S21.7 7.5 19 7.5H17V10.5C17 12.5 15.5 13.5 13.5 13.5H9C7.2 13.5 6.5 14.7 6.5 16.2V20C6.5 22.5 9 23.5 12.5 23.5Z" fill="#f6cf3e"/><path d="M16 20L21.5 22 16 24" fill="none" stroke="#333" stroke-width="1.3" transform="translate(1 -1)"/></svg>
<svg style="left:1207px;top:103px;" width="24" height="24" viewBox="0 0 24 24"><text x="0.5" y="12.5" font-family="Liberation Sans, sans-serif" font-size="10.2" font-weight="700" fill="#3a3f4a">KML</text><rect x="13.5" y="14" width="10" height="10" rx="1.6" fill="#5c9c6c" stroke="#4a7d57" stroke-width="0.6"/><path d="M18.5 15.8V22.2M15.3 19.0H21.7" stroke="#fff" stroke-width="2" fill="none"/></svg>
<svg style="left:1237px;top:103px;" width="24" height="24" viewBox="0 0 24 24"><text x="0" y="11" font-family="Liberation Sans, sans-serif" font-size="8.6" font-weight="700" fill="#111">HTML</text><rect x="13.5" y="13.5" width="10.5" height="10.5" rx="1.6" fill="#d2b12c" stroke="#b8992a" stroke-width="0.6"/><path d="M18.75 14.97V22.53M14.97 18.75H22.53M16.1 16.1L21.4 21.4M21.4 16.1L16.1 21.4" stroke="#fffbe0" stroke-width="1.05" fill="none"/></svg>
<svg style="left:1269px;top:103px;" width="24" height="24" viewBox="0 0 24 24"><rect x="1" y="2.5" width="20" height="15" rx="6.5" fill="#4f6f9f" stroke="#2a4266" stroke-width="1"/><rect x="5" y="5" width="4.5" height="4.5" fill="#203555"/><rect x="9.5" y="5" width="4.5" height="4.5" fill="#9fb6d6"/><rect x="14" y="5" width="4" height="4.5" fill="#203555"/><rect x="5" y="9.5" width="4.5" height="4.5" fill="#9fb6d6"/><rect x="9.5" y="9.5" width="4.5" height="4.5" fill="#203555"/><rect x="14" y="9.5" width="4" height="4.5" fill="#9fb6d6"/><rect x="14" y="13.5" width="10.5" height="10.5" rx="1.6" fill="#5c9c6c" stroke="#4a7d57" stroke-width="0.6"/><path d="M19.25 15.39V22.11M15.89 18.75H22.61" stroke="#fff" stroke-width="2" fill="none"/></svg>
<svg style="left:1299px;top:103px;" width="24" height="24" viewBox="0 0 24 24"><rect x="0.8" y="1.0" width="4.7" height="4.5" rx="0.6" fill="#b8cf6a" stroke="#a9a9a9" stroke-width="0.4"/><rect x="6.7" y="1.0" width="4.7" height="4.5" rx="0.6" fill="#f29a6e" stroke="#a9a9a9" stroke-width="0.4"/><rect x="12.6" y="1.0" width="4.7" height="4.5" rx="0.6" fill="#b9a5ef" stroke="#a9a9a9" stroke-width="0.4"/><rect x="18.5" y="1.0" width="4.7" height="4.5" rx="0.6" fill="#8fc4ee" stroke="#a9a9a9" stroke-width="0.4"/><rect x="0.8" y="6.6" width="4.7" height="4.5" rx="0.6" fill="#f29a6e" stroke="#a9a9a9" stroke-width="0.4"/><rect x="6.7" y="6.6" width="4.7" height="4.5" rx="0.6" fill="#8fc4ee" stroke="#a9a9a9" stroke-width="0.4"/><rect x="12.6" y="6.6" width="4.7" height="4.5" rx="0.6" fill="#b8cf6a" stroke="#a9a9a9" stroke-width="0.4"/><rect x="18.5" y="6.6" width="4.7" height="4.5" rx="0.6" fill="#b9a5ef" stroke="#a9a9a9" stroke-width="0.4"/><rect x="0.8" y="12.2" width="4.7" height="4.5" rx="0.6" fill="#b9a5ef" stroke="#a9a9a9" stroke-width="0.4"/><rect x="6.7" y="12.2" width="4.7" height="4.5" rx="0.6" fill="#b8cf6a" stroke="#a9a9a9" stroke-width="0.4"/><rect x="12.6" y="12.2" width="4.7" height="4.5" rx="0.6" fill="#8fc4ee" stroke="#a9a9a9" stroke-width="0.4"/><rect x="18.5" y="12.2" width="4.7" height="4.5" rx="0.6" fill="#f29a6e" stroke="#a9a9a9" stroke-width="0.4"/><rect x="0.8" y="17.8" width="4.7" height="4.5" rx="0.6" fill="#8fc4ee" stroke="#a9a9a9" stroke-width="0.4"/><rect x="6.7" y="17.8" width="4.7" height="4.5" rx="0.6" fill="#b9a5ef" stroke="#a9a9a9" stroke-width="0.4"/><rect x="12.6" y="17.8" width="4.7" height="4.5" rx="0.6" fill="#f29a6e" stroke="#a9a9a9" stroke-width="0.4"/><rect x="18.5" y="17.8" width="4.7" height="4.5" rx="0.6" fill="#b8cf6a" stroke="#a9a9a9" stroke-width="0.4"/></svg>
<svg style="left:1330px;top:103px;" width="24" height="24" viewBox="0 0 24 24"><rect x="1" y="1.5" width="19.5" height="19.5" fill="#fff" stroke="#7ea0cf" stroke-width="1.1"/><path d="M7.5 1.5V21M14 1.5V21M1 8H20.5M1 14.5H20.5" stroke="#7ea0cf" stroke-width="1.1"/><rect x="14.5" y="14.5" width="9.5" height="9.5" rx="1.6" fill="#d2b12c" stroke="#b8992a" stroke-width="0.6"/><path d="M19.25 15.83V22.67M15.83 19.25H22.67M16.9 16.9L21.6 21.6M21.6 16.9L16.9 21.6" stroke="#fffbe0" stroke-width="1.05" fill="none"/></svg>
<div style="left:1359px;top:98px;width:1px;height:33px;background:#c4c4c4;"></div>
<div style="left:1360px;top:98px;width:1px;height:33px;background:#fbfbfb;"></div>
<svg style="left:1365px;top:102px;" width="3" height="28" viewBox="0 0 3 28"><rect x="0" y="0.0" width="2.2" height="2.2" fill="#9c9c9c"/><rect x="-0.8" y="-0.8" width="1.4" height="1.4" fill="#fdfdfd"/><rect x="0" y="4.1" width="2.2" height="2.2" fill="#9c9c9c"/><rect x="-0.8" y="3.3" width="1.4" height="1.4" fill="#fdfdfd"/><rect x="0" y="8.2" width="2.2" height="2.2" fill="#9c9c9c"/><rect x="-0.8" y="7.4" width="1.4" height="1.4" fill="#fdfdfd"/><rect x="0" y="12.3" width="2.2" height="2.2" fill="#9c9c9c"/><rect x="-0.8" y="11.5" width="1.4" height="1.4" fill="#fdfdfd"/><rect x="0" y="16.4" width="2.2" height="2.2" fill="#9c9c9c"/><rect x="-0.8" y="15.6" width="1.4" height="1.4" fill="#fdfdfd"/><rect x="0" y="20.5" width="2.2" height="2.2" fill="#9c9c9c"/><rect x="-0.8" y="19.7" width="1.4" height="1.4" fill="#fdfdfd"/><rect x="0" y="24.6" width="2.2" height="2.2" fill="#9c9c9c"/><rect x="-0.8" y="23.8" width="1.4" height="1.4" fill="#fdfdfd"/></svg>
<svg style="left:1375px;top:103px;" width="24" height="24" viewBox="0 0 24 24"><rect x="2" y="1.5" width="20" height="21" rx="1" fill="#5b88c6" stroke="#22344f" stroke-width="1"/><rect x="2" y="1.5" width="5" height="21" fill="#2a3f5f"/><text x="10.5" y="17.5" font-family="Liberation Sans, sans-serif" font-size="14" fill="#fff">?</text></svg>
<div style="left:1404px;top:98px;width:1px;height:33px;background:#c4c4c4;"></div>
<div style="left:1405px;top:98px;width:1px;height:33px;background:#fbfbfb;"></div>
<svg style="left:1410px;top:102px;" width="3" height="28" viewBox="0 0 3 28"><rect x="0" y="0.0" width="2.2" height="2.2" fill="#9c9c9c"/><rect x="-0.8" y="-0.8" width="1.4" height="1.4" fill="#fdfdfd"/><rect x="0" y="4.1" width="2.2" height="2.2" fill="#9c9c9c"/><rect x="-0.8" y="3.3" width="1.4" height="1.4" fill="#fdfdfd"/><rect x="0" y="8.2" width="2.2" height="2.2" fill="#9c9c9c"/><rect x="-0.8" y="7.4" width="1.4" height="1.4" fill="#fdfdfd"/><rect x="0" y="12.3" width="2.2" height="2.2" fill="#9c9c9c"/><rect x="-0.8" y="11.5" width="1.4" height="1.4" fill="#fdfdfd"/><rect x="0" y="16.4" width="2.2" height="2.2" fill="#9c9c9c"/><rect x="-0.8" y="15.6" width="1.4" height="1.4" fill="#fdfdfd"/><rect x="0" y="20.5" width="2.2" height="2.2" fill="#9c9c9c"/><rect x="-0.8" y="19.7" width="1.4" height="1.4" fill="#fdfdfd"/><rect x="0" y="24.6" width="2.2" height="2.2" fill="#9c9c9c"/><rect x="-0.8" y="23.8" width="1.4" height="1.4" fill="#fdfdfd"/></svg>
<svg style="left:1420px;top:103px;" width="24" height="24" viewBox="0 0 24 24"><path d="M0.5 12.5H9M15 12.5H23.5M12.5 0.5V9M12.5 15V23.5" stroke="#2a2a2a" stroke-width="1"/><circle cx="12.5" cy="12.5" r="4" fill="none" stroke="#c8232c" stroke-width="1" stroke-dasharray="3.2 3"/></svg>
<svg style="left:4px;top:136px;" width="3" height="28" viewBox="0 0 3 28"><rect x="0" y="0.0" width="2.2" height="2.2" fill="#9c9c9c"/><rect x="-0.8" y="-0.8" width="1.4" height="1.4" fill="#fdfdfd"/><rect x="0" y="4.1" width="2.2" height="2.2" fill="#9c9c9c"/><rect x="-0.8" y="3.3" width="1.4" height="1.4" fill="#fdfdfd"/><rect x="0" y="8.2" width="2.2" height="2.2" fill="#9c9c9c"/><rect x="-0.8" y="7.4" width="1.4" height="1.4" fill="#fdfdfd"/><rect x="0" y="12.3" width="2.2" height="2.2" fill="#9c9c9c"/><rect x="-0.8" y="11.5" width="1.4" height="1.4" fill="#fdfdfd"/><rect x="0" y="16.4" width="2.2" height="2.2" fill="#9c9c9c"/><rect x="-0.8" y="15.6" width="1.4" height="1.4" fill="#fdfdfd"/><rect x="0" y="20.5" width="2.2" height="2.2" fill="#9c9c9c"/><rect x="-0.8" y="19.7" width="1.4" height="1.4" fill="#fdfdfd"/><rect x="0" y="24.6" width="2.2" height="2.2" fill="#9c9c9c"/><rect x="-0.8" y="23.8" width="1.4" height="1.4" fill="#fdfdfd"/></svg>
<svg style="left:15px;top:137px;" width="24" height="24" viewBox="0 0 24 24"><path d="M2 22.5L22 1.5V22.5Z" fill="#e6e2e0" stroke="#c2c2c2" stroke-width="1"/><path d="M8 19.5L18.5 8.5V19.5Z" fill="#f0f0f0" stroke="#c2c2c2" stroke-width="0.9"/><path d="M19 5H22M19.5 8H22M19.5 11H22M19.5 14H22" stroke="#c2c2c2" stroke-width="0.8"/></svg>
<svg style="left:47px;top:137px;" width="24" height="24" viewBox="0 0 24 24"><circle cx="3" cy="11.5" r="2.1" fill="none" stroke="#c2c2c2" stroke-width="1.2"/><circle cx="9.5" cy="3" r="2.1" fill="none" stroke="#c2c2c2" stroke-width="1.2"/><circle cx="18.5" cy="5" r="2.1" fill="none" stroke="#c2c2c2" stroke-width="1.2"/><rect x="12" y="13" width="10.5" height="10.5" rx="1.6" fill="#cdcdcd"/><path d="M13.5 17H18V14.8L21.6 18.2 18 21.6V19.5H13.5Z" fill="#f5f5f5"/></svg>
<svg style="left:77px;top:148px;" width="9" height="5" viewBox="0 0 9 5"><path d="M0 0H9L4.5 5Z" fill="#7d7d7d"/></svg>
<svg style="left:93px;top:137px;" width="24" height="24" viewBox="0 0 24 24"><path d="M2 6C3 1.5 9 1.5 12 3.5 15 1.5 21.5 2.5 21.5 7 21.5 10.5 18 12 15 11 11 13.5 3 12.5 2 6Z" fill="#d7d7d7" stroke="#c2c2c2" stroke-width="1"/><rect x="12.5" y="13" width="10.5" height="10.5" rx="1.6" fill="#d3d3d3"/><path d="M15.5 20.6A3.2 3.2 0 1 1 20.6 19.6" fill="none" stroke="#f3f3f3" stroke-width="1.6"/></svg>
<svg style="left:124px;top:137px;" width="24" height="24" viewBox="0 0 24 24"><path d="M2 6C3 1.5 9 1 12 3.5 15 5 16 8 14 11 10 13.5 3 12 2 6Z" fill="#d7d7d7" stroke="#c2c2c2" stroke-width="1"/><path d="M10 10L16 7 22.5 10V18L16.5 22.5 10 19Z" fill="#e0e0e0" stroke="#c2c2c2" stroke-width="1"/><path d="M8 7L15 13M15 13V9.5M15 13H11.5" stroke="#c2c2c2" stroke-width="1.4" fill="none"/></svg>
<svg style="left:155px;top:137px;" width="24" height="24" viewBox="0 0 24 24"><path d="M2 6C3 1.5 9 1.5 12 3.5 15 1.5 21.5 2.5 21.5 7 21.5 10.5 18 12 15 11 11 13.5 3 12.5 2 6Z" fill="#d7d7d7" stroke="#c2c2c2" stroke-width="1"/><ellipse cx="8" cy="6.5" rx="3.6" ry="2.2" fill="#f2f2f2" stroke="#c2c2c2" stroke-width="0.9"/><rect x="12.5" y="13" width="10.5" height="10.5" rx="1.6" fill="#d2d2d2"/><path d="M17.75 14.785V21.715M14.285 18.25H21.215M15.3 15.8L20.2 20.7M20.2 15.8L15.3 20.7" stroke="#f1f1f1" stroke-width="1.2" fill="none"/></svg>
<svg style="left:186px;top:137px;" width="24" height="24" viewBox="0 0 24 24"><path d="M2 6C3 1.5 9 1.5 12 3.5 15 1.5 21.5 2.5 21.5 7 21.5 10.5 18 12 15 11 11 13.5 3 12.5 2 6Z" fill="#d7d7d7" stroke="#c2c2c2" stroke-width="1"/><ellipse cx="5" cy="18" rx="4" ry="3" transform="rotate(-40 5 18)" fill="#d7d7d7" stroke="#c2c2c2" stroke-width="0.9"/><rect x="12.5" y="13" width="10.5" height="10.5" rx="1.6" fill="#d2d2d2"/><path d="M17.75 14.785V21.715M14.285 18.25H21.215M15.3 15.8L20.2 20.7M20.2 15.8L15.3 20.7" stroke="#f1f1f1" stroke-width="1.2" fill="none"/></svg>
<svg style="left:217px;top:137px;" width="24" height="24" viewBox="0 0 24 24"><path d="M2 6C3 1.5 9 1.5 12 3.5 15 1.5 21.5 2.5 21.5 7 21.5 10.5 18 12 15 11 11 13.5 3 12.5 2 6Z" fill="#d7d7d7" stroke="#c2c2c2" stroke-width="1"/><path d="M5 6C8 3.5 12 4 14 6S18 8.5 19 7" fill="none" stroke="#c2c2c2" stroke-width="0.9"/><rect x="12.5" y="13" width="10.5" height="10.5" rx="1.6" fill="#d2d2d2"/><path d="M17.75 14.785V21.715M14.285 18.25H21.215M15.3 15.8L20.2 20.7M20.2 15.8L15.3 20.7" stroke="#f1f1f1" stroke-width="1.2" fill="none"/></svg>
<svg style="left:248px;top:137px;" width="24" height="24" viewBox="0 0 24 24"><path d="M2 6C3 1.5 9 1.5 12 3.5 15 1.5 21.5 2.5 21.5 7 21.5 10.5 18 12 15 11 11 13.5 3 12.5 2 6Z" fill="#d7d7d7" stroke="#c2c2c2" stroke-width="1"/><ellipse cx="8" cy="6.5" rx="3.6" ry="2.2" fill="#f2f2f2" stroke="#c2c2c2" stroke-width="0.9"/><rect x="13" y="13" width="10.5" height="10.5" rx="1.6" fill="#d6d6d6"/><path d="M15.5 15.5L21.0 21.0M21.0 15.5L15.5 21.0" stroke="#f3f3f3" stroke-width="1.8"/></svg>
<svg style="left:280px;top:137px;" width="24" height="24" viewBox="0 0 24 24"><path d="M2 6C3 1.5 9 1.5 12 3.5 15 1.5 21.5 2.5 21.5 7 21.5 10.5 18 12 15 11 11 13.5 3 12.5 2 6Z" fill="#d7d7d7" stroke="#c2c2c2" stroke-width="1"/><ellipse cx="5" cy="18" rx="4" ry="3" transform="rotate(-40 5 18)" fill="#d7d7d7" stroke="#c2c2c2" stroke-width="0.9"/><rect x="13" y="13" width="10.5" height="10.5" rx="1.6" fill="#d6d6d6"/><path d="M15.5 15.5L21.0 21.0M21.0 15.5L15.5 21.0" stroke="#f3f3f3" stroke-width="1.8"/></svg>
<svg style="left:310px;top:137px;" width="24" height="24" viewBox="0 0 24 24"><path d="M2.5 5C4 1.5 10 2 13 3.5 17 1.5 22 3 21.5 8 21 11 17 11.5 14.5 10 13.5 14 12.5 18.5 9 21.5 5 22 3.5 17 4.5 12.5 3 10.5 2 8 2.5 5Z" fill="#d7d7d7" stroke="#c2c2c2" stroke-width="1"/></svg>
<svg style="left:341px;top:137px;" width="24" height="24" viewBox="0 0 24 24"><path d="M3.5 15.5C5 9 11 3 16.5 2 21 1.5 23 5.5 21 10 18 16.5 12 21.5 7 22.5 3 23 2.5 19.5 3.5 15.5Z" fill="#d7d7d7" stroke="#c2c2c2" stroke-width="1"/><path d="M8 16C10 11 14 7.5 18 6.5" fill="none" stroke="#c2c2c2" stroke-width="1"/></svg>
<svg style="left:372px;top:137px;" width="24" height="24" viewBox="0 0 24 24"><path d="M3 3L8 16.5 13.5 4H21" fill="none" stroke="#c2c2c2" stroke-width="1.1"/><rect x="1.5" y="1.5" width="3" height="3" fill="#f5f5f5" stroke="#c2c2c2" stroke-width="0.8"/><rect x="19.5" y="2.5" width="3" height="3" fill="#f5f5f5" stroke="#c2c2c2" stroke-width="0.8"/><rect x="12" y="13" width="11" height="10.5" rx="1.6" fill="#d6d6d6"/><path d="M14.5 21L20.5 15.5M20.5 15.5H17M20.5 15.5V19" stroke="#f3f3f3" stroke-width="1.4" fill="none"/></svg>
<svg style="left:403px;top:137px;" width="24" height="24" viewBox="0 0 24 24"><path d="M12 1V23M2 12H22" stroke="#c2c2c2" stroke-width="1.1"/><rect x="16" y="2.5" width="5.5" height="5.5" fill="#f3f3f3" stroke="#c2c2c2" stroke-width="0.9"/><rect x="2.5" y="16" width="5.5" height="5.5" fill="#f3f3f3" stroke="#c2c2c2" stroke-width="0.9"/><rect x="10" y="10" width="4" height="4" fill="#c2c2c2"/></svg>
<svg style="left:433px;top:137px;" width="24" height="24" viewBox="0 0 24 24"><ellipse cx="6.5" cy="6.5" rx="5.5" ry="5" fill="#d7d7d7" stroke="#c2c2c2" stroke-width="0.9"/><ellipse cx="17.5" cy="6.5" rx="5.5" ry="5" fill="#d7d7d7" stroke="#c2c2c2" stroke-width="0.9"/><path d="M9 10L16 21M15 10L8 21" stroke="#c2c2c2" stroke-width="1.5"/><ellipse cx="7.5" cy="21.5" rx="2" ry="2.2" fill="none" stroke="#c2c2c2" stroke-width="1.1"/><ellipse cx="16.5" cy="21.5" rx="2" ry="2.2" fill="none" stroke="#c2c2c2" stroke-width="1.1"/></svg>
<svg style="left:464px;top:137px;" width="24" height="24" viewBox="0 0 24 24"><ellipse cx="6.5" cy="6.5" rx="5.5" ry="5" fill="#d7d7d7" stroke="#c2c2c2" stroke-width="0.9"/><ellipse cx="17.5" cy="6.5" rx="5.5" ry="5" fill="#d7d7d7" stroke="#c2c2c2" stroke-width="0.9"/><path d="M9 10L16 21M15 10L8 21" stroke="#c2c2c2" stroke-width="1.5"/><ellipse cx="7.5" cy="21.5" rx="2" ry="2.2" fill="none" stroke="#c2c2c2" stroke-width="1.1"/><ellipse cx="16.5" cy="21.5" rx="2" ry="2.2" fill="none" stroke="#c2c2c2" stroke-width="1.1"/></svg>
<svg style="left:496px;top:137px;" width="24" height="24" viewBox="0 0 24 24"><ellipse cx="7" cy="7" rx="6" ry="5" fill="#d7d7d7" stroke="#c2c2c2" stroke-width="0.9"/><ellipse cx="17" cy="7" rx="6" ry="5" fill="#d7d7d7" stroke="#c2c2c2" stroke-width="0.9"/><path d="M3 8H21" stroke="#c2c2c2" stroke-width="1.2"/><path d="M6 12C8 16 11 19 15 21" fill="none" stroke="#c2c2c2" stroke-width="1.2"/></svg>
<svg style="left:527px;top:137px;" width="24" height="24" viewBox="0 0 24 24"><path d="M2 3.5H22M2 8H22M2 12.5H22M2 17H22M2 21.5H22" stroke="#d7d7d7" stroke-width="1.1"/><path d="M12 2V23" stroke="#d7d7d7" stroke-width="1"/><rect x="9" y="6.5" width="6" height="3" fill="#f2f2f2" stroke="#c2c2c2" stroke-width="0.7"/><rect x="9" y="15.5" width="6" height="3" fill="#f2f2f2" stroke="#c2c2c2" stroke-width="0.7"/></svg>
<svg style="left:559px;top:137px;" width="24" height="24" viewBox="0 0 24 24"><path d="M9 2.5L19 8 9 12Z" fill="#e9e9e9" stroke="#c2c2c2" stroke-width="1"/><path d="M5 5C1 9 2 15 6 17" fill="none" stroke="#c2c2c2" stroke-width="1.3"/><path d="M7 22L12.5 13 17 22Z" fill="#f0f0f0" stroke="#d7d7d7" stroke-width="1"/></svg>
<svg style="left:588px;top:148px;" width="9" height="5" viewBox="0 0 9 5"><path d="M0 0H9L4.5 5Z" fill="#7d7d7d"/></svg>
<svg style="left:4px;top:170px;" width="3" height="28" viewBox="0 0 3 28"><rect x="0" y="0.0" width="2.2" height="2.2" fill="#9c9c9c"/><rect x="-0.8" y="-0.8" width="1.4" height="1.4" fill="#fdfdfd"/><rect x="0" y="4.1" width="2.2" height="2.2" fill="#9c9c9c"/><rect x="-0.8" y="3.3" width="1.4" height="1.4" fill="#fdfdfd"/><rect x="0" y="8.2" width="2.2" height="2.2" fill="#9c9c9c"/><rect x="-0.8" y="7.4" width="1.4" height="1.4" fill="#fdfdfd"/><rect x="0" y="12.3" width="2.2" height="2.2" fill="#9c9c9c"/><rect x="-0.8" y="11.5" width="1.4" height="1.4" fill="#fdfdfd"/><rect x="0" y="16.4" width="2.2" height="2.2" fill="#9c9c9c"/><rect x="-0.8" y="15.6" width="1.4" height="1.4" fill="#fdfdfd"/><rect x="0" y="20.5" width="2.2" height="2.2" fill="#9c9c9c"/><rect x="-0.8" y="19.7" width="1.4" height="1.4" fill="#fdfdfd"/><rect x="0" y="24.6" width="2.2" height="2.2" fill="#9c9c9c"/><rect x="-0.8" y="23.8" width="1.4" height="1.4" fill="#fdfdfd"/></svg>
<svg style="left:15px;top:171px;" width="24" height="24" viewBox="0 0 24 24"><rect x="1" y="0.5" width="21" height="21" fill="#cfe8c0"/><path d="M1 6C6 4 9 9 14 7S20 3 22 5M3 21C5 15 10 16 12 12S18 10 22 13" fill="none" stroke="#9fcf8f" stroke-width="2"/><circle cx="11" cy="10" r="3" fill="#bcd7ee" opacity="0.8"/><rect x="13.5" y="13.5" width="9" height="9" fill="none"/><path d="M14 21L21 14M15 15L21 21" stroke="#4f8a2f" stroke-width="1.6"/><circle cx="17.5" cy="18" r="3.2" fill="none" stroke="#4f8a2f" stroke-width="1.2"/></svg>
<svg style="left:47px;top:171px;" width="24" height="24" viewBox="0 0 24 24"><rect x="1" y="1" width="20" height="20" fill="#f6e6c3"/><rect x="1.5" y="2" width="5.5" height="5.5" fill="#4fae4f"/><path d="M1 16C6 13 10 18 14 15S19 12 21 14V21H1Z" fill="#7faee0"/><path d="M4 12L9 9 12 12" fill="none" stroke="#e88a8a" stroke-width="1.4"/><path d="M8 18.5L17.5 3.5" stroke="#8a4a20" stroke-width="3.4" stroke-linecap="round"/><path d="M17 4L18.6 1.2" stroke="#5a2d12" stroke-width="3" stroke-linecap="round"/><path d="M6.5 21L7.5 17.5 9.8 19Z" fill="#222"/></svg>
<div style="left:75px;top:166px;width:1px;height:33px;background:#c4c4c4;"></div>
<div style="left:76px;top:166px;width:1px;height:33px;background:#fbfbfb;"></div>
<svg style="left:80px;top:170px;" width="3" height="28" viewBox="0 0 3 28"><rect x="0" y="0.0" width="2.2" height="2.2" fill="#9c9c9c"/><rect x="-0.8" y="-0.8" width="1.4" height="1.4" fill="#fdfdfd"/><rect x="0" y="4.1" width="2.2" height="2.2" fill="#9c9c9c"/><rect x="-0.8" y="3.3" width="1.4" height="1.4" fill="#fdfdfd"/><rect x="0" y="8.2" width="2.2" height="2.2" fill="#9c9c9c"/><rect x="-0.8" y="7.4" width="1.4" height="1.4" fill="#fdfdfd"/><rect x="0" y="12.3" width="2.2" height="2.2" fill="#9c9c9c"/><rect x="-0.8" y="11.5" width="1.4" height="1.4" fill="#fdfdfd"/><rect x="0" y="16.4" width="2.2" height="2.2" fill="#9c9c9c"/><rect x="-0.8" y="15.6" width="1.4" height="1.4" fill="#fdfdfd"/><rect x="0" y="20.5" width="2.2" height="2.2" fill="#9c9c9c"/><rect x="-0.8" y="19.7" width="1.4" height="1.4" fill="#fdfdfd"/><rect x="0" y="24.6" width="2.2" height="2.2" fill="#9c9c9c"/><rect x="-0.8" y="23.8" width="1.4" height="1.4" fill="#fdfdfd"/></svg>
<svg style="left:91px;top:171px;" width="24" height="24" viewBox="0 0 24 24"><path d="M12 3L15.5 7.5H13.2V11H10.8V7.5H8.5Z" fill="#000"/><rect x="5.5" y="12.5" width="13" height="9" fill="#000"/><rect x="9" y="11" width="4" height="2" fill="#000"/><circle cx="12" cy="17" r="2.8" fill="none" stroke="#fff" stroke-width="1.1"/><circle cx="12" cy="17" r="1" fill="#fff"/></svg>
<svg style="left:121px;top:171px;" width="24" height="24" viewBox="0 0 24 24"><rect x="2.5" y="2" width="17" height="14.5" fill="#fff" stroke="#000" stroke-width="2.4" stroke-dasharray="3.4 1.6"/><rect x="5.5" y="5" width="11" height="9" fill="#555"/><path d="M5.5 12L9 8 12 11 14 9 16.5 12V14H5.5Z" fill="#222"/><path d="M14.5 9.5V22.5L17.6 19.6 19.8 24 22 23 19.9 18.6H24Z" fill="#fff" stroke="#111" stroke-width="1"/></svg>
<div style="left:151px;top:166px;width:1px;height:33px;background:#c4c4c4;"></div>
<div style="left:152px;top:166px;width:1px;height:33px;background:#fbfbfb;"></div>
<svg style="left:156px;top:170px;" width="3" height="28" viewBox="0 0 3 28"><rect x="0" y="0.0" width="2.2" height="2.2" fill="#9c9c9c"/><rect x="-0.8" y="-0.8" width="1.4" height="1.4" fill="#fdfdfd"/><rect x="0" y="4.1" width="2.2" height="2.2" fill="#9c9c9c"/><rect x="-0.8" y="3.3" width="1.4" height="1.4" fill="#fdfdfd"/><rect x="0" y="8.2" width="2.2" height="2.2" fill="#9c9c9c"/><rect x="-0.8" y="7.4" width="1.4" height="1.4" fill="#fdfdfd"/><rect x="0" y="12.3" width="2.2" height="2.2" fill="#9c9c9c"/><rect x="-0.8" y="11.5" width="1.4" height="1.4" fill="#fdfdfd"/><rect x="0" y="16.4" width="2.2" height="2.2" fill="#9c9c9c"/><rect x="-0.8" y="15.6" width="1.4" height="1.4" fill="#fdfdfd"/><rect x="0" y="20.5" width="2.2" height="2.2" fill="#9c9c9c"/><rect x="-0.8" y="19.7" width="1.4" height="1.4" fill="#fdfdfd"/><rect x="0" y="24.6" width="2.2" height="2.2" fill="#9c9c9c"/><rect x="-0.8" y="23.8" width="1.4" height="1.4" fill="#fdfdfd"/></svg>
<svg style="left:167px;top:171px;" width="24" height="24" viewBox="0 0 24 24"><rect x="0" y="0" width="8" height="8" fill="#c9d9ea"/><rect x="8" y="0" width="8" height="8" fill="#a9bfd8"/><rect x="16" y="0" width="8" height="8" fill="#c9d9ea"/><rect x="0" y="8" width="8" height="8" fill="#a9bfd8"/><rect x="8" y="8" width="8" height="8" fill="#c9d9ea"/><rect x="16" y="8" width="8" height="8" fill="#a9bfd8"/><rect x="0" y="16" width="8" height="8" fill="#c9d9ea"/><rect x="8" y="16" width="8" height="8" fill="#a9bfd8"/><rect x="16" y="16" width="8" height="8" fill="#c9d9ea"/><path d="M3 22L4 18.5 12.5 10 14.5 12 6 20.5Z" fill="#dfe8f2" stroke="#222" stroke-width="1"/><path d="M11.5 8.5L16 13" stroke="#111" stroke-width="2.6" stroke-linecap="round"/><path d="M14 10.5L18.5 4.5" stroke="#111" stroke-width="5.5" stroke-linecap="round"/></svg>
<svg style="left:198px;top:171px;" width="24" height="24" viewBox="0 0 24 24"><rect x="0" y="0" width="8" height="8" fill="#c9d9ea"/><rect x="8" y="0" width="8" height="8" fill="#a9bfd8"/><rect x="16" y="0" width="8" height="8" fill="#c9d9ea"/><rect x="0" y="8" width="8" height="8" fill="#a9bfd8"/><rect x="8" y="8" width="8" height="8" fill="#c9d9ea"/><rect x="16" y="8" width="8" height="8" fill="#a9bfd8"/><rect x="0" y="16" width="8" height="8" fill="#c9d9ea"/><rect x="8" y="16" width="8" height="8" fill="#a9bfd8"/><rect x="16" y="16" width="8" height="8" fill="#c9d9ea"/><path d="M2.5 22L4 16.5 15.5 3 20.5 6.5 9 20Z" fill="#efd84a" stroke="#8c7a17" stroke-width="1"/><path d="M2.5 22L4 16.5 9 20Z" fill="#e9dcc0" stroke="#6e6e6e" stroke-width="0.8"/><path d="M15.5 3L17.5 0.8 22.3 4.2 20.5 6.5Z" fill="#e7c6c6" stroke="#8c7a17" stroke-width="0.8"/></svg>
<svg style="left:229px;top:171px;" width="24" height="24" viewBox="0 0 24 24"><rect x="0" y="0" width="8" height="8" fill="#c4ccd6"/><rect x="8" y="0" width="8" height="8" fill="#aeb8c6"/><rect x="16" y="0" width="8" height="8" fill="#c4ccd6"/><rect x="0" y="8" width="8" height="8" fill="#aeb8c6"/><rect x="8" y="8" width="8" height="8" fill="#c4ccd6"/><rect x="16" y="8" width="8" height="8" fill="#aeb8c6"/><rect x="0" y="16" width="8" height="8" fill="#c4ccd6"/><rect x="8" y="16" width="8" height="8" fill="#aeb8c6"/><rect x="16" y="16" width="8" height="8" fill="#c4ccd6"/><path d="M3.5 17.5L10 10.5 16 15.5 9.5 22C7.5 23.5 2 20.5 3.5 17.5Z" fill="#d8373c" stroke="#8a1d22" stroke-width="0.8"/><path d="M10 10.5L16.5 3.5C18.5 2 23 5 22 8L16 15.5Z" fill="#2f5fc4" stroke="#1c3a7d" stroke-width="0.8"/></svg>
<svg style="left:260px;top:171px;" width="24" height="24" viewBox="0 0 24 24"><rect x="0" y="0" width="8" height="8" fill="#c4ccd6"/><rect x="8" y="0" width="8" height="8" fill="#aeb8c6"/><rect x="16" y="0" width="8" height="8" fill="#c4ccd6"/><rect x="0" y="8" width="8" height="8" fill="#aeb8c6"/><rect x="8" y="8" width="8" height="8" fill="#c4ccd6"/><rect x="16" y="8" width="8" height="8" fill="#aeb8c6"/><rect x="0" y="16" width="8" height="8" fill="#c4ccd6"/><rect x="8" y="16" width="8" height="8" fill="#aeb8c6"/><rect x="16" y="16" width="8" height="8" fill="#c4ccd6"/><path d="M3 17L8.5 11 13 15 7.5 21.5C5.5 23 1.5 20 3 17Z" fill="#d8373c" stroke="#8a1d22" stroke-width="0.8"/><path d="M8.5 11L14.5 4.5C16.5 3 20.5 6 19.5 9L13 15Z" fill="#2f5fc4" stroke="#1c3a7d" stroke-width="0.8"/><path d="M9 7L21 20" stroke="#8a6c3a" stroke-width="4.2" stroke-linecap="round"/><path d="M9 7L20.6 19.6" stroke="#e8cf9a" stroke-width="2.4" stroke-linecap="round"/><path d="M9.5 2.5A3.6 3.6 0 1 0 10 8.6" fill="none" stroke="#dfe3ea" stroke-width="2.2"/></svg>
<svg style="left:315px;top:181px;" width="9" height="5" viewBox="0 0 9 5"><path d="M0 0H9L4.5 5Z" fill="#555"/></svg>
<div style="left:328px;top:170px;width:60.5px;height:25px;background:#eeeeee;border:1px solid #d6d6d6;"></div>
<div class="t" style="left:331.50px;top:176px;font-size:13px;color:#7d7d7d;letter-spacing:-0.360px;">0,0000</div>
<div style="left:387.5px;top:170px;width:61.0px;height:25px;background:#eeeeee;border:1px solid #d6d6d6;"></div>
<div class="t" style="left:391.00px;top:176px;font-size:13px;color:#7d7d7d;letter-spacing:-0.400px;">0,00</div>
<div style="left:447.5px;top:170px;width:60.5px;height:25px;background:#eeeeee;border:1px solid #d6d6d6;"></div>
<div class="t" style="left:451.00px;top:176px;font-size:13px;color:#7d7d7d;letter-spacing:-0.400px;">0,00</div>
<svg style="left:511px;top:171px;" width="24" height="24" viewBox="0 0 24 24"><rect x="0" y="0" width="24" height="24" fill="#e6e6e6"/><path d="M10 4V8.5C18 8.5 20 13 17 19 17.5 15.5 15.5 14 10 14V18.5L3 11.2Z" fill="#dadada" stroke="#c2c2c2" stroke-width="0.9"/></svg>
<svg style="left:542px;top:171px;" width="24" height="24" viewBox="0 0 24 24"><rect x="0" y="0" width="24" height="24" fill="#e6e6e6"/><path d="M14 4V8.5C6 8.5 4 13 7 19 6.5 15.5 8.5 14 14 14V18.5L21 11.2Z" fill="#dadada" stroke="#c2c2c2" stroke-width="0.9"/></svg>
<svg style="left:574px;top:171px;" width="24" height="24" viewBox="0 0 24 24"><rect x="0.5" y="0.5" width="21.5" height="22.5" fill="#5b9ad5" stroke="#111" stroke-width="1"/><rect x="0.5" y="0.5" width="4.5" height="22.5" fill="#2fa84f" stroke="#111" stroke-width="0.8"/><path d="M6 23V14L9 5.5 11 4 12 7.5 15.5 10 19 13.5 18 16 20.5 19 22 23Z" fill="#000"/><text x="14" y="9.5" font-family="Liberation Sans, sans-serif" font-size="9" font-weight="700" fill="#fff">?</text></svg>
<svg style="left:5px;top:204px;" width="44" height="2" viewBox="0 0 44 2"><rect x="0.0" y="0" width="1.8" height="2" fill="#a9a9a9"/><rect x="3.6" y="0" width="1.8" height="2" fill="#a9a9a9"/><rect x="7.2" y="0" width="1.8" height="2" fill="#a9a9a9"/><rect x="10.8" y="0" width="1.8" height="2" fill="#a9a9a9"/><rect x="14.4" y="0" width="1.8" height="2" fill="#a9a9a9"/><rect x="18.0" y="0" width="1.8" height="2" fill="#a9a9a9"/><rect x="21.6" y="0" width="1.8" height="2" fill="#a9a9a9"/><rect x="25.2" y="0" width="1.8" height="2" fill="#a9a9a9"/><rect x="28.8" y="0" width="1.8" height="2" fill="#a9a9a9"/><rect x="32.4" y="0" width="1.8" height="2" fill="#a9a9a9"/><rect x="36.0" y="0" width="1.8" height="2" fill="#a9a9a9"/><rect x="39.6" y="0" width="1.8" height="2" fill="#a9a9a9"/></svg>
<svg style="left:5px;top:214px;" width="24" height="24" viewBox="0 0 24 24"><path d="M3 3L9 18L15 3.5H22" fill="none" stroke="#2c3645" stroke-width="1.4"/><circle cx="3" cy="3" r="1.7" fill="#fff" stroke="#2c3645" stroke-width="0.9"/><circle cx="15" cy="3.5" r="1.7" fill="#fff" stroke="#2c3645" stroke-width="0.9"/><circle cx="22" cy="3.5" r="1.7" fill="#fff" stroke="#2c3645" stroke-width="0.9"/><circle cx="9" cy="18" r="1.8" fill="#fff" stroke="#2c3645" stroke-width="0.9"/><rect x="14" y="14" width="10" height="10" rx="1.6" fill="#5c9c6c" stroke="#4a7d57" stroke-width="0.6"/><path d="M19.0 15.8V22.2M15.8 19.0H22.2" stroke="#fff" stroke-width="2" fill="none"/></svg>
<svg style="left:5px;top:244px;" width="24" height="24" viewBox="0 0 24 24"><rect x="1.0" y="1.0" width="6.3" height="6.3" fill="#2a4366"/><rect x="7.3" y="1.0" width="6.3" height="6.3" fill="#9fb6d6"/><rect x="13.6" y="1.0" width="6.3" height="6.3" fill="#2a4366"/><rect x="1.0" y="7.3" width="6.3" height="6.3" fill="#6f8fbd"/><rect x="7.3" y="7.3" width="6.3" height="6.3" fill="#20334f"/><rect x="13.6" y="7.3" width="6.3" height="6.3" fill="#9fb6d6"/><rect x="1.0" y="13.6" width="6.3" height="6.3" fill="#20334f"/><rect x="7.3" y="13.6" width="6.3" height="6.3" fill="#6f8fbd"/><rect x="13.6" y="13.6" width="6.3" height="6.3" fill="#dfe7f1"/><rect x="14" y="14" width="10" height="10" rx="1.6" fill="#5c9c6c" stroke="#4a7d57" stroke-width="0.6"/><path d="M19.0 15.8V22.2M15.8 19.0H22.2" stroke="#fff" stroke-width="2" fill="none"/></svg>
<svg style="left:5px;top:274px;" width="24" height="24" viewBox="0 0 24 24"><rect x="1" y="1" width="20" height="20" fill="#8fb0d8" stroke="#2f4a73" stroke-width="1.2"/><path d="M1 12H21M12 1V21M1 1L12 12M21 1L12 12" stroke="#2f4a73" stroke-width="1.1"/><rect x="14" y="14" width="10" height="10" rx="1.6" fill="#5c9c6c" stroke="#4a7d57" stroke-width="0.6"/><path d="M19.0 15.8V22.2M15.8 19.0H22.2" stroke="#fff" stroke-width="2" fill="none"/></svg>
<svg style="left:5px;top:304px;" width="24" height="24" viewBox="0 0 24 24"><path d="M8.5 1.5A4.6 4.6 0 1 1 6.5 10.5C8.5 10.5 9 12 7 14.5L4.5 17C8 15.5 13 12.5 13 6.5A4.6 4.6 0 0 0 8.5 1.5Z" fill="#3f6fb5" stroke="#2a4d85" stroke-width="0.8"/><circle cx="8.5" cy="6" r="4.3" fill="#3f6fb5"/><rect x="14" y="14" width="10" height="10" rx="1.6" fill="#5c9c6c" stroke="#4a7d57" stroke-width="0.6"/><path d="M19.0 15.8V22.2M15.8 19.0H22.2" stroke="#fff" stroke-width="2" fill="none"/></svg>
<svg style="left:5px;top:334px;" width="24" height="24" viewBox="0 0 24 24"><path d="M1.5 23C3 14 9 5 22.5 1.2 22 6 19 10 16 12 18 12 19.5 11.5 20.5 11 17 16 11 17.5 6.5 17.5Z" fill="#7ea6dc" stroke="#3f6293" stroke-width="0.9"/><path d="M1.5 23C5 15 11 8 21 2.5" fill="none" stroke="#35527d" stroke-width="1.1"/><rect x="14" y="14" width="10" height="10" rx="1.6" fill="#5c9c6c" stroke="#4a7d57" stroke-width="0.6"/><path d="M19.0 15.8V22.2M15.8 19.0H22.2" stroke="#fff" stroke-width="2" fill="none"/></svg>
<svg style="left:5px;top:364px;" width="24" height="24" viewBox="0 0 24 24"><rect x="1" y="1" width="21.5" height="21" rx="2" fill="#a9bfdc" stroke="#5b7599" stroke-width="1.2"/><path d="M4 4L9.5 17.5L15.5 4H20.5" fill="none" stroke="#2c3645" stroke-width="1.3"/><circle cx="4" cy="4" r="1.4" fill="#fff" stroke="#2c3645" stroke-width="0.7"/><circle cx="15.5" cy="4" r="1.4" fill="#fff" stroke="#2c3645" stroke-width="0.7"/><circle cx="9.5" cy="18" r="1.6" fill="#fff" stroke="#2c3645" stroke-width="0.8"/><rect x="14" y="14" width="10" height="10" rx="1.6" fill="#5c9c6c" stroke="#4a7d57" stroke-width="0.6"/><path d="M19.0 15.8V22.2M15.8 19.0H22.2" stroke="#fff" stroke-width="2" fill="none"/></svg>
<svg style="left:5px;top:394px;" width="24" height="24" viewBox="0 0 24 24"><path d="M5 3.5C2 4 0.8 8 2 12 3 14.5 5.5 14.5 6.5 12.5L8 5Z" fill="#3f6fb5" stroke="#223f6e" stroke-width="0.9"/><path d="M6 4.5C7.5 0.8 15 0.5 17.5 3.5 20 6.5 19 11 17.5 13.5 16.8 15.5 17 17.5 18.5 18.5 17 20.5 14.5 19.5 13.8 17 13.2 15 13.5 13.5 13 12.5 12 14 11.5 18.5 10.5 20.5 8.5 20.5 7.5 19 7.8 16 8 13 6.5 11.5 6 9Z" fill="#4a7fc4" stroke="#223f6e" stroke-width="0.9"/><path d="M9.5 7.5C10.5 10 10.8 12 10.2 14.5M15.5 8C15.2 10 14.2 11.5 13 12.5" fill="none" stroke="#cfe0f5" stroke-width="1"/><circle cx="13.2" cy="6.2" r="0.9" fill="#fff"/><rect x="14" y="14" width="10" height="10" rx="1.6" fill="#5c9c6c" stroke="#4a7d57" stroke-width="0.6"/><path d="M19.0 15.8V22.2M15.8 19.0H22.2" stroke="#fff" stroke-width="2" fill="none"/></svg>
<svg style="left:36px;top:404px;" width="9" height="5" viewBox="0 0 9 5"><path d="M0 0H9L4.5 5Z" fill="#111"/></svg>
<svg style="left:5px;top:424px;" width="24" height="24" viewBox="0 0 24 24"><circle cx="11" cy="11" r="10" fill="#b9d0ec" stroke="#2f4a73" stroke-width="1.1"/><ellipse cx="11" cy="11" rx="4.6" ry="10" fill="none" stroke="#6f8fbd" stroke-width="0.8"/><path d="M1 11H21M2.5 6H19.5M2.5 16H19.5M11 1V21" stroke="#6f8fbd" stroke-width="0.8"/><path d="M4 6l4-2 3 1 1 3-3 1-1 3-3-1zM13 5l4 0 2 3-2 1-3-1zM12 11l4 0 1 3-2 3-3-2z" fill="#2f4a73"/><rect x="14" y="14" width="10" height="10" rx="1.6" fill="#5c9c6c" stroke="#4a7d57" stroke-width="0.6"/><path d="M19.0 15.8V22.2M15.8 19.0H22.2" stroke="#fff" stroke-width="2" fill="none"/></svg>
<svg style="left:36px;top:434px;" width="9" height="5" viewBox="0 0 9 5"><path d="M0 0H9L4.5 5Z" fill="#111"/></svg>
<svg style="left:5px;top:454px;" width="24" height="24" viewBox="0 0 24 24"><circle cx="11" cy="11" r="10" fill="#dfe8f5" stroke="#1f2f4a" stroke-width="1.4"/><ellipse cx="11" cy="11" rx="4.6" ry="10" fill="none" stroke="#1f2f4a" stroke-width="1.2"/><path d="M1 11H21M2.5 6H19.5M2.5 16H19.5" stroke="#1f2f4a" stroke-width="1.3"/><path d="M3 8H8V11H3ZM12 12H17V15H12ZM8 15H12V19H8Z" fill="#2f4a73"/><rect x="14" y="14" width="10" height="10" rx="1.6" fill="#5c9c6c" stroke="#4a7d57" stroke-width="0.6"/><path d="M19.0 15.8V22.2M15.8 19.0H22.2" stroke="#fff" stroke-width="2" fill="none"/></svg>
<svg style="left:5px;top:484px;" width="24" height="24" viewBox="0 0 24 24"><circle cx="11" cy="11" r="10" fill="#e6edf6" stroke="#5b7599" stroke-width="1.1"/><ellipse cx="11" cy="11" rx="4.6" ry="10" fill="none" stroke="#9fb2cc" stroke-width="0.9"/><path d="M1 11H21M2.5 6H19.5M2.5 16H19.5" stroke="#9fb2cc" stroke-width="0.9"/><path d="M5 5.5L10 17L15 6H19" fill="none" stroke="#2c3645" stroke-width="1.3"/><circle cx="5" cy="5.5" r="1.4" fill="#fff" stroke="#2c3645" stroke-width="0.7"/><circle cx="15" cy="6" r="1.4" fill="#fff" stroke="#2c3645" stroke-width="0.7"/><circle cx="10" cy="17" r="1.5" fill="#fff" stroke="#2c3645" stroke-width="0.7"/><rect x="14" y="14" width="10" height="10" rx="1.6" fill="#5c9c6c" stroke="#4a7d57" stroke-width="0.6"/><path d="M19.0 15.8V22.2M15.8 19.0H22.2" stroke="#fff" stroke-width="2" fill="none"/></svg>
<svg style="left:36px;top:494px;" width="9" height="5" viewBox="0 0 9 5"><path d="M0 0H9L4.5 5Z" fill="#111"/></svg>
<svg style="left:5px;top:514px;" width="24" height="24" viewBox="0 0 24 24"><path d="M3 3L9 18L15 3.5H22" fill="none" stroke="#2c3645" stroke-width="1.4"/><circle cx="3" cy="3" r="1.7" fill="#fff" stroke="#2c3645" stroke-width="0.9"/><circle cx="15" cy="3.5" r="1.7" fill="#fff" stroke="#2c3645" stroke-width="0.9"/><circle cx="22" cy="3.5" r="1.7" fill="#fff" stroke="#2c3645" stroke-width="0.9"/><circle cx="9" cy="18" r="1.8" fill="#fff" stroke="#2c3645" stroke-width="0.9"/><rect x="14" y="14" width="10" height="10" rx="1.6" fill="#d2b12c" stroke="#b8992a" stroke-width="0.6"/><path d="M19.0 15.4V22.6M15.4 19.0H22.6M16.5 16.5L21.5 21.5M21.5 16.5L16.5 21.5" stroke="#fffbe0" stroke-width="1.05" fill="none"/></svg>
<svg style="left:36px;top:524px;" width="9" height="5" viewBox="0 0 9 5"><path d="M0 0H9L4.5 5Z" fill="#111"/></svg>
<svg style="left:13px;top:544px;" width="24" height="24" viewBox="0 0 24 24"><rect x="1" y="1" width="20" height="19.5" fill="#fff" stroke="#3f6293" stroke-width="1.1"/><rect x="1" y="1" width="20" height="5" fill="#4a74ad"/><rect x="1" y="1" width="5" height="19.5" fill="#4a74ad"/><path d="M1 6H21M1 10.8H21M1 15.6H21M6 1V20.5M11 1V20.5M16 1V20.5" stroke="#7f9fcb" stroke-width="1"/><rect x="14" y="14" width="10" height="10" rx="1.6" fill="#5c9c6c" stroke="#4a7d57" stroke-width="0.6"/><path d="M19.0 15.8V22.2M15.8 19.0H22.2" stroke="#fff" stroke-width="2" fill="none"/></svg>
<svg style="left:55px;top:239px;" width="16" height="16" viewBox="0 0 16 16"><path d="M1 9L7 6 10 13 4 15Z" fill="#e8502a"/><path d="M1 9L4 8 6 14 4 15Z" fill="#f3c32a"/><path d="M5 7L7 6 10 13 8 14Z" fill="#4f9ad5"/><path d="M8 9L15 1.5" stroke="#c9961e" stroke-width="2.6" stroke-linecap="round"/></svg>
<svg style="left:78px;top:237px;" width="16" height="19" viewBox="0 0 16 19"><path d="M1.5 8.5V17.5H9.5" fill="none" stroke="#b5b5b5" stroke-width="1.2"/><rect x="3.5" y="5.5" width="10" height="9" fill="#fafafa" stroke="#8a8a8a" stroke-width="1.1"/><rect x="6.5" y="1.5" width="5" height="10" fill="#fff" stroke="#7b7b7b" stroke-width="1.1"/><circle cx="12.5" cy="14.5" r="3.6" fill="#8fc79a" stroke="#5c9c6c" stroke-width="0.7"/><path d="M12.5 12.5V16.5M10.5 14.5H14.5" stroke="#fff" stroke-width="1.3"/></svg>
<svg style="left:101px;top:240px;" width="17" height="15" viewBox="0 0 17 15"><path d="M0.8 6C4 0.5 12 0.5 15.5 6 12 11.5 4 11.5 0.8 6Z" fill="#eef1f5" stroke="#9aa4b3" stroke-width="1"/><circle cx="8" cy="6" r="3.1" fill="#7f9cc4" stroke="#4a6288" stroke-width="0.7"/><circle cx="8" cy="6" r="1.2" fill="#111"/><path d="M9.5 10.5H16.5L13 14.5Z" fill="#111"/></svg>
<svg style="left:124px;top:239px;" width="16" height="16" viewBox="0 0 16 16"><path d="M0.8 1.5H15.2L9.5 8.5V15L6.5 13V8.5Z" fill="#5b9ad5" stroke="#2f5a96" stroke-width="0.9"/><path d="M0.8 1.5H15.2L13.5 3.6H2.5Z" fill="#f3c32a" stroke="#b38d14" stroke-width="0.7"/></svg>
<svg style="left:147px;top:238px;" width="17" height="18" viewBox="0 0 17 18"><text x="0" y="12.5" font-family="Liberation Serif, serif" font-size="18" fill="#5d3b73">ε</text><path d="M9 10.5H16.5L14.3 13V17L11.3 15.5V13Z" fill="#cfcfcf" stroke="#8a8a8a" stroke-width="0.7"/></svg>
<svg style="left:170px;top:246px;" width="9" height="5" viewBox="0 0 9 5"><path d="M0 0H9L4.5 5Z" fill="#111"/></svg>
<svg style="left:186px;top:239px;" width="16" height="16" viewBox="0 0 16 16"><rect x="1.5" y="3" width="4" height="4" fill="#fbe9a0" stroke="#b38d14" stroke-width="0.8"/><rect x="1.5" y="9.5" width="4" height="4" fill="#fbe9a0" stroke="#b38d14" stroke-width="0.8"/><path d="M3.5 0.5V16M5.5 5H8M5.5 11.5H8" stroke="#9a9a9a" stroke-width="0.7" fill="none"/><path d="M9.5 1H13V8.5H15.2L11.2 15 7.3 8.5H9.5Z" fill="#4f82c4" stroke="#2f5a96" stroke-width="0.7"/></svg>
<svg style="left:209px;top:239px;" width="16" height="16" viewBox="0 0 16 16"><rect x="1.5" y="4.5" width="4" height="4" fill="#fbe9a0" stroke="#b38d14" stroke-width="0.8"/><rect x="1.5" y="11" width="4" height="4" fill="#fbe9a0" stroke="#b38d14" stroke-width="0.8"/><path d="M3.5 2V16M5.5 6.5H8M5.5 13H8" stroke="#9a9a9a" stroke-width="0.7" fill="none"/><path d="M9.5 15H13V7.5H15.2L11.2 1 7.3 7.5H9.5Z" fill="#4f82c4" stroke="#2f5a96" stroke-width="0.7"/></svg>
<svg style="left:231px;top:239px;" width="16" height="16" viewBox="0 0 16 16"><rect x="1" y="1.5" width="11.5" height="11.5" fill="#fbfbfb" stroke="#8a8a8a" stroke-width="1"/><rect x="8.5" y="9.5" width="7" height="5" rx="1" fill="#d8373c"/><path d="M10 12H14" stroke="#fff" stroke-width="1.3"/></svg>
<div style="left:363px;top:200px;width:1197px;height:796px;background:#fff;border:1px solid #8c8c8c;"></div>
<svg style="left:363px;top:200px;overflow:hidden;" width="1197" height="796" viewBox="0 0 1197 796"><path d="M171.5 -6.0 L2.6 307.1 L296.5 684.4 L397.0 657.0" fill="none" stroke="#f6f67a" stroke-width="7.2" stroke-linejoin="miter"/><path d="M171.5 -6.0 L2.6 307.1 L296.5 684.4 L397.0 657.0" fill="none" stroke="#eeee1c" stroke-width="5.2" stroke-linejoin="miter"/><path d="M393.0 250.3 L388.5 250.2 L384.1 251.0 L380.3 251.8 L376.8 253.5 L372.9 254.1 L369.8 257.6 L366.4 257.4 L363.0 258.1 L359.6 257.5 L356.2 258.3 L352.8 257.5 L349.4 258.0 L348.9 262.2 L349.0 266.4 L344.3 267.2 L340.2 263.7 L336.5 265.2 L333.0 267.2 L330.2 263.7 L326.9 260.7 L320.8 260.3 L317.8 262.5 L315.6 265.6 L312.6 267.8 L308.3 269.5 L304.4 271.9 L300.3 269.3 L296.2 269.3 L292.1 269.9 L288.9 271.2 L286.0 272.9 L282.3 271.8 L278.4 272.1 L274.7 271.3 L269.6 274.6 L269.0 278.1 L269.7 281.7 L269.0 285.2 L265.3 284.7 L261.5 284.8 L257.4 284.4 L253.3 285.3 L249.2 284.8 L245.8 286.5 L243.3 289.5 L240.0 291.3 L234.9 290.9 L230.9 289.9 L226.7 289.9 L223.8 292.3 L221.6 295.4 L217.7 297.6 L214.4 300.5 L211.1 302.8 L208.3 305.6 L206.6 310.1 L205.8 314.8 L203.2 319.6 L200.0 320.4 L197.0 321.6 L194.1 319.7 L190.7 318.8 L187.8 316.9 L183.6 318.1 L179.7 320.0 L176.7 322.1 L174.2 324.8 L171.0 326.6 L168.4 329.2 L163.3 328.8 L161.6 325.6 L158.9 323.0 L157.6 319.5 L154.9 317.0 L153.1 313.8 L150.0 312.4 L147.0 314.8 L148.2 318.5 L150.6 321.8 L151.1 325.8 L153.1 329.2 L153.2 332.8 L154.1 336.3 L155.3 339.4 L157.2 342.0 L153.7 343.6 L150.6 346.0 L147.0 347.6 L144.4 350.4 L142.8 354.0 L139.9 356.6 L137.8 359.8 L137.2 363.5 L137.6 367.4 L137.1 371.1 L133.4 371.7 L130.1 373.3 L126.5 374.1 L123.6 375.6 L121.3 377.9 L118.3 379.3 L115.5 381.3 L113.5 384.2 L110.3 385.8 L108.1 388.5 L104.9 389.5 L102.1 391.4 L98.8 392.1 L95.8 393.6 L92.5 394.9 L89.8 397.3 L86.6 398.7 L85.8 402.2 L85.6 405.8 L83.0 408.1 L81.2 411.1 L78.4 413.1 L76.4 416.0 L72.3 416.3 L68.2 417.1 L69.3 419.5 L71.6 421.1 L72.4 423.7 L74.7 425.3 L75.3 428.1 L77.7 429.5 L78.5 432.2 L80.9 433.6 L81.5 436.5 L84.1 437.8 L84.5 440.7 L86.9 442.2 L87.5 445.0 L89.9 446.5 L90.5 449.3 L93.0 450.7 L93.7 453.4 L96.2 454.8 L96.9 457.5 L99.2 459.0 L99.6 462.0 L102.2 463.4 L102.7 466.2 L105.3 467.5 L105.8 470.4 L108.3 471.8 L109.0 474.5 L111.3 476.1 L112.2 478.6 L114.3 480.3 L114.8 483.2 L117.5 484.5 L118.1 487.2 L120.7 488.6 L121.1 491.5 L123.8 492.8 L124.2 495.7 L126.5 497.2 L127.1 500.1 L129.5 501.5 L130.2 504.3 L132.8 505.6 L133.2 508.5 L135.9 509.7 L136.3 512.7 L138.6 514.2 L139.6 516.7 L141.9 518.3 L142.4 521.2 L144.8 522.7 L145.6 525.3 L147.8 526.9 L148.7 529.5 L150.8 531.2 L151.7 533.7 L154.1 535.2 L154.8 537.9 L157.2 539.4 L157.9 542.1 L160.1 543.8 L160.9 546.4 L163.2 548.0 L163.7 550.8 L166.2 552.2 L166.8 555.0 L169.5 556.3 L170.1 559.1 L172.5 560.5 L173.0 563.4 L175.5 564.8 L176.0 567.7 L178.5 569.1 L179.3 571.8 L181.4 573.4 L182.3 576.0 L184.5 577.7 L185.3 580.2 L187.5 581.9 L188.2 584.6 L190.8 586.0 L191.2 588.9 L193.9 590.2 L194.5 592.9 L196.9 594.4 L197.5 597.2 L199.7 598.8 L200.5 601.4 L202.9 602.9 L203.7 605.6 L205.8 607.3 L206.6 609.9 L209.1 611.3 L209.7 614.2 L212.0 615.7 L212.7 618.4 L214.9 620.0 L215.6 622.8 L218.3 624.0 L218.7 626.9 L221.2 628.4 L221.8 631.1 L224.2 632.6 L224.8 635.4 L227.4 636.8 L228.0 639.5 L230.5 640.9 L230.9 643.9 L233.3 645.3 L233.9 648.1 L236.5 649.4 L237.2 652.2 L239.4 653.8 L240.0 656.6 L242.4 658.1 L243.2 660.7 L245.8 662.1 L246.3 664.9 L248.7 666.4 L249.1 669.3 L251.9 670.5 L252.2 673.5 L254.8 674.9 L255.2 677.8 L257.7 679.2 L258.3 682.0 L260.8 683.4 L261.4 686.2 L264.0 687.5 L264.6 690.3 L267.0 691.8 L267.5 694.6 L270.2 695.9 L270.6 698.9 L273.0 700.3 L273.7 703.0 L276.3 704.4 L276.8 707.2 L279.2 708.7 L279.7 711.6 L282.4 712.8 L283.0 715.7 L285.3 717.2 L286.0 719.9 L288.4 721.4 L288.9 724.2 L291.5 725.6 L291.9 728.5 L294.3 730.0 L294.9 732.8 L297.4 734.2 L298.1 736.9 L300.4 738.5 L301.6 740.8 L356.2 739.6 L356.6 732.5 L361.2 732.0 L363.9 729.0 L366.2 725.8 L367.8 720.9 L370.2 718.7 L371.7 715.9 L374.5 714.0 L376.1 711.2 L378.8 709.3 L380.4 706.5 L382.7 704.3 L385.4 701.5 L387.7 698.5 L393.0 695.8 L437.0 695.0 L437.0 250.0Z" fill="#ffff00" stroke="#33330c" stroke-width="1" shape-rendering="crispEdges"/><path d="M83.0 410.3 L296.5 684.4 L397.0 657.0" fill="none" stroke="#f3f31c" stroke-width="5.6"/><path d="M382.2 367.0 L382.2 388.0" stroke="#e0521a" stroke-width="1.5"/><path d="M389.0 361.0 L389.0 404.0" stroke="#e0521a" stroke-width="1.5"/><path d="M394.0 354.0 L373.9 370.6 L394.0 419.5" fill="none" stroke="#d42a10" stroke-width="4" stroke-linejoin="miter"/></svg>
<div style="left:1565px;top:202px;width:349px;height:30px;background:#d8d8d8;"></div>
<div style="left:1565px;top:231px;width:349px;height:1px;background:#c4c4c4;"></div>
<svg style="left:1867px;top:207px;" width="16" height="18" viewBox="0 0 16 18"><path d="M5 1.5H14.5V10.5H11" fill="none" stroke="#222" stroke-width="2.4"/><path d="M1.5 7H10.5V16H1.5Z" fill="none" stroke="#222" stroke-width="2.2"/><path d="M1.5 7.6H10.5" stroke="#222" stroke-width="3"/></svg>
<svg style="left:1892px;top:208px;" width="16" height="16" viewBox="0 0 16 16"><path d="M2 2L14 14M14 2L2 14" stroke="#222" stroke-width="3.2" fill="none"/></svg>
<div style="left:1565px;top:260px;width:348.5px;height:735.5px;background:#fff;border:1px solid #8c8c8c;"></div>
<div style="left:1566px;top:741px;width:327px;height:24px;background:#d9d9d9;"></div>
<div class="t" style="left:1733.50px;top:411px;font-size:14.3px;color:#111;letter-spacing:-0.226px;">enzierte Karten, Scans, S</div>
<div class="t" style="left:1733.00px;top:483px;font-size:14.3px;color:#111;letter-spacing:-1.065px;">in</div>
<div class="t" style="left:1736.00px;top:531px;font-size:14.3px;color:#111;letter-spacing:0.249px;">- tipps &amp; Tricks.lnk</div>
<div class="t" style="left:1731.00px;top:579px;font-size:14.3px;color:#111;">e</div>
<div class="t" style="left:1733.00px;top:627px;font-size:14.3px;color:#111;letter-spacing:0.170px;">berer Reutweg</div>
<div class="t" style="left:1733.00px;top:651px;font-size:14.3px;color:#111;letter-spacing:0.282px;">berer Reutweg - Kopie</div>
<div class="t" style="left:1733.00px;top:699px;font-size:14.3px;color:#111;letter-spacing:-0.019px;">ewaessernetz</div>
<div class="t" style="left:1733.00px;top:723px;font-size:14.3px;color:#111;letter-spacing:-0.396px;">n.shp</div>
<div class="t" style="left:1729.00px;top:747px;font-size:14.3px;color:#111;letter-spacing:-0.290px;">einer__669m_shp.shp</div>
<div class="t" style="left:1731.00px;top:795px;font-size:14.3px;color:#111;letter-spacing:0.177px;">oo.shp</div>
<div class="t" style="left:1731.00px;top:843px;font-size:14.3px;color:#111;letter-spacing:-0.395px;">Docs</div>
<svg style="left:1572px;top:964.5px;" width="8" height="12" viewBox="0 0 8 12"><path d="M1 1L6 6L1 11" fill="none" stroke="#a3a3a3" stroke-width="1.7"/></svg>
<svg style="left:1590px;top:962.5px;" width="18" height="16" viewBox="0 0 18 16"><path d="M1 15V1.5H7L8.5 3.5H16.5V15Z" fill="#ededed" stroke="#9a9a9a" stroke-width="1.2"/></svg>
<div class="t" style="left:1614.00px;top:964px;font-size:14.3px;color:#111;letter-spacing:0.575px;">Biotop</div>
<div style="left:1893px;top:261px;width:19.5px;height:714px;background:#f0f0f0;"></div>
<div style="left:1893px;top:443px;width:19.5px;height:193px;background:#cdcdcd;"></div>
<svg style="left:1897px;top:267px;" width="11" height="8" viewBox="0 0 11 8"><path d="M1 6.5L5.5 1.5L10 6.5" fill="none" stroke="#444" stroke-width="1.8"/></svg>
<svg style="left:1897px;top:958px;" width="11" height="8" viewBox="0 0 11 8"><path d="M1 1.5L5.5 6.5L10 1.5" fill="none" stroke="#444" stroke-width="1.8"/></svg>
<div style="left:1566px;top:975px;width:346.5px;height:19.5px;background:#f0f0f0;"></div>
<div style="left:1622px;top:975px;width:201px;height:19.5px;background:#cdcdcd;"></div>
<svg style="left:1572px;top:979px;" width="8" height="11" viewBox="0 0 8 11"><path d="M6.5 1L1.5 5.5L6.5 10" fill="none" stroke="#444" stroke-width="1.8"/></svg>
<svg style="left:1878px;top:979px;" width="8" height="11" viewBox="0 0 8 11"><path d="M1.5 1L6.5 5.5L1.5 10" fill="none" stroke="#444" stroke-width="1.8"/></svg>
<div style="left:0px;top:996px;width:1916px;height:31px;background:#f0f0f0;"></div>
<div style="left:4px;top:1001px;width:279px;height:22px;background:#fff;border:1px solid #7a7a7a;"></div>
<svg style="left:13px;top:1005px;" width="13" height="13" viewBox="0 0 13 13"><circle cx="5" cy="5" r="3.8" fill="none" stroke="#8f8f8f" stroke-width="1.3"/><path d="M7.8 7.8L12 12" stroke="#8f8f8f" stroke-width="1.6"/></svg>
<div class="t" style="left:32.60px;top:1006px;font-size:13px;color:#7f7f7f;letter-spacing:-0.032px;">Zu suchender Typ (Strg+K)</div>
<div class="t" style="left:898.20px;top:1006px;font-size:13px;color:#111;letter-spacing:-0.238px;">Koordinate</div>
<div style="left:962px;top:1001.5px;width:132.5px;height:21.0px;background:#fff;border:1px solid #7a7a7a;"></div>
<div class="t" style="left:969.00px;top:1006px;font-size:13px;color:#111;letter-spacing:-0.160px;">473877.9,5397217.9</div>
<svg style="left:1098px;top:1002px;" width="20" height="20" viewBox="0 0 20 20"><ellipse cx="8.5" cy="9.5" rx="5.6" ry="8" transform="rotate(-28 8.5 9.5)" fill="#fff" stroke="#111" stroke-width="2.3"/><path d="M3.5 6.5L11.5 11M7 4L11 11.5" stroke="#111" stroke-width="1.8"/><circle cx="12.8" cy="15" r="2.5" fill="#fff" stroke="#111" stroke-width="1.7"/><circle cx="12.8" cy="15" r="0.8" fill="#111"/><path d="M15.5 3l1-1M17.5 6l1.5-0.5M14 1.5l0.4-1" stroke="#222" stroke-width="1"/></svg>
<div class="t" style="left:1131.60px;top:1006px;font-size:13px;color:#111;letter-spacing:-0.510px;">Maßstab</div>
<div style="left:1182px;top:1001.5px;width:90.70000000000005px;height:21.0px;background:#fff;border:1px solid #7a7a7a;"></div>
<div class="t" style="left:1187.00px;top:1006px;font-size:13px;color:#111;letter-spacing:-0.044px;">1:2500</div>
<svg style="left:1256px;top:1009px;" width="11" height="7" viewBox="0 0 11 7"><path d="M0.8 0.8L5.5 5.6L10.2 0.8" fill="none" stroke="#333" stroke-width="1.2"/></svg>
<svg style="left:1284px;top:1003px;" width="16" height="19" viewBox="0 0 16 19"><path d="M3.5 9V6a4.5 4.5 0 0 1 9 0V9" fill="none" stroke="#9a9a9a" stroke-width="2"/><rect x="1" y="8.5" width="14" height="10" rx="1.2" fill="#6e6e6e"/></svg>
<div class="t" style="left:1308.80px;top:1006px;font-size:13px;color:#111;letter-spacing:-0.108px;">Vergrößerung</div>
<div style="left:1391px;top:1001.5px;width:87px;height:21.0px;background:#fff;border:1px solid #7a7a7a;"></div>
<div class="t" style="left:1394.50px;top:1006px;font-size:13px;color:#111;letter-spacing:-0.262px;">100%</div>
<div style="left:1462px;top:1003px;width:14px;height:9px;background:#e9e9e9;border:1px solid #b5b5b5;"></div>
<div style="left:1462px;top:1012.5px;width:14px;height:9px;background:#e9e9e9;border:1px solid #b5b5b5;"></div>
<svg style="left:1465px;top:1005px;" width="8" height="5" viewBox="0 0 8 5"><path d="M0 5L4 0L8 5Z" fill="#111"/></svg>
<svg style="left:1465px;top:1014.5px;" width="8" height="5" viewBox="0 0 8 5"><path d="M0 0L4 5L8 0Z" fill="#111"/></svg>
<div class="t" style="left:1487.00px;top:1006px;font-size:13px;color:#111;letter-spacing:-0.310px;">Drehung</div>
<div style="left:1544px;top:1001.5px;width:84.5px;height:21.0px;background:#fff;border:1px solid #7a7a7a;"></div>
<div class="t" style="left:1547.30px;top:1006px;font-size:13px;color:#111;letter-spacing:0.164px;">0,0 °</div>
<div style="left:1613px;top:1003px;width:14px;height:9px;background:#e9e9e9;border:1px solid #b5b5b5;"></div>
<div style="left:1613px;top:1012.5px;width:14px;height:9px;background:#e9e9e9;border:1px solid #b5b5b5;"></div>
<svg style="left:1616px;top:1005px;" width="8" height="5" viewBox="0 0 8 5"><path d="M0 5L4 0L8 5Z" fill="#111"/></svg>
<svg style="left:1616px;top:1014.5px;" width="8" height="5" viewBox="0 0 8 5"><path d="M0 0L4 5L8 0Z" fill="#111"/></svg>
<svg style="left:1635px;top:1004px;" width="16" height="16" viewBox="0 0 16 16"><rect x="0.5" y="0.5" width="15" height="15" fill="#fff" stroke="#333" stroke-width="1"/><path d="M3 8.0L6.4 12L13.2 3.6" fill="none" stroke="#222" stroke-width="1.3"/></svg>
<div class="t" style="left:1657.00px;top:1006px;font-size:13px;color:#111;letter-spacing:-0.335px;">Zeichnen</div>
<svg style="left:1725px;top:1003px;" width="20" height="18" viewBox="0 0 20 18"><ellipse cx="10" cy="9" rx="8.5" ry="7.5" fill="#e8e8e8" stroke="#666" stroke-width="1.3"/><ellipse cx="10" cy="9" rx="4" ry="7.5" fill="none" stroke="#666" stroke-width="1.1"/><path d="M1.5 9H18.5M3 5H17M3 13H17M10 1.5V16.5" stroke="#666" stroke-width="1.1" fill="none"/><path d="M0 9C4 1 16 1 20 9" fill="none" stroke="#666" stroke-width="1.2"/></svg>
<div class="t" style="left:1749.20px;top:1006px;font-size:13px;color:#111;letter-spacing:-0.649px;">EPSG:25832</div>
<svg style="left:1837px;top:1002.5px;" width="21" height="20" viewBox="0 0 21 20"><ellipse cx="10" cy="8.6" rx="9.8" ry="8.2" fill="#555"/><path d="M11.5 15.5L19.5 19.6L16 12.5Z" fill="#555"/><circle cx="5.6" cy="8.6" r="1.6" fill="#fff"/><circle cx="10" cy="8.6" r="1.6" fill="#fff"/><circle cx="14.4" cy="8.6" r="1.6" fill="#fff"/></svg>
<svg style="left:1870px;top:1002px;" width="23" height="21" viewBox="0 0 23 21"><path d="M2 8H7V5.5C5 3.5 7.5 1.5 9.5 2.5S11 5 10.5 6V8H16V12C19 10 22 11.5 21 14S17.5 16.5 16 15V19.5H2Z" fill="#bdbdbd" stroke="#8a8a8a" stroke-width="1.2"/><path d="M15 2.5C19 0.5 22.5 3 21.5 6.5" fill="none" stroke="#8a8a8a" stroke-width="1.6"/><path d="M4 16L9 11.5" stroke="#8a8a8a" stroke-width="1.4"/></svg>
<div style="left:1909px;top:1011px;width:3px;height:3px;background:#bdbdbd;"></div>
<div style="left:1904px;top:1016px;width:3px;height:3px;background:#bdbdbd;"></div>
<div style="left:1909px;top:1016px;width:3px;height:3px;background:#bdbdbd;"></div>
<div style="left:1899px;top:1021px;width:3px;height:3px;background:#bdbdbd;"></div>
<div style="left:1904px;top:1021px;width:3px;height:3px;background:#bdbdbd;"></div>
<div style="left:1909px;top:1021px;width:3px;height:3px;background:#bdbdbd;"></div>
<div style="left:756px;top:167px;width:976px;height:791px;background:#f0f0f0;box-shadow:0 0 0 1px #6f6f6f, 4px 4px 22px 0 rgba(0,0,0,0.38);"></div>
<div style="left:756px;top:167px;width:976px;height:37px;background:#fff;"></div>
<svg style="left:765.5px;top:176px;" width="19" height="19" viewBox="0 0 20 20"><circle cx="9.4" cy="9.4" r="7.1" fill="none" stroke="#6f9b2f" stroke-width="3.8"/><path d="M10.5 10.5L19 19" stroke="#fff" stroke-width="6.2"/><path d="M11.5 11.5L18.6 18.6" stroke="#5f8a2a" stroke-width="3.6" stroke-linecap="butt"/><path d="M8.3 8.3L12 12" stroke="#e9b42a" stroke-width="2.8" stroke-linecap="round"/></svg>
<div class="t" style="left:790.10px;top:178px;font-size:15.4px;color:#111;letter-spacing:0.070px;">Verschneidung</div>
<svg style="left:1704px;top:179px;" width="13" height="13" viewBox="0 0 13 13"><path d="M0.7 0.7L12 12M12 0.7L0.7 12" stroke="#111" stroke-width="1.2" fill="none"/></svg>
<div style="left:769.5px;top:240.5px;width:675px;height:609px;background:#f0f0f0;border:1px solid;border-color:#dadada #fdfdfd #fdfdfd #dadada;box-shadow:inset 1px 1px 0 #fcfcfc;"></div>
<div style="left:769.5px;top:240.5px;width:675px;height:1px;background:#d9d9d9;"></div>
<div style="left:860px;top:218.5px;width:75.5px;height:22.5px;background:#f0f0f0;border:1px solid #d9d9d9;border-bottom:none;"></div>
<div style="left:769.5px;top:216.5px;width:91px;height:25px;background:#ffffff;border:1px solid #d9d9d9;border-bottom:none;"></div>
<div class="t" style="left:784.30px;top:223px;font-size:13px;color:#111;letter-spacing:-0.110px;">Parameter</div>
<div class="t" style="left:874.00px;top:224px;font-size:13px;color:#111;letter-spacing:-0.175px;">Protokoll</div>
<svg style="left:1449px;top:217px;" width="6" height="10" viewBox="0 0 6 10"><path d="M5.5 0.5L0.5 5L5.5 9.5Z" fill="#111"/></svg>
<div class="t" style="left:775.00px;top:248px;font-size:13px;color:#111;letter-spacing:-0.266px;">Eingabelayer</div>
<div style="left:775px;top:269px;width:599px;height:25.5px;background:#e1e1e1;border:1px solid #adadad;"></div>
<svg style="left:1357.4px;top:279.2px;" width="11" height="7" viewBox="0 0 11 7"><path d="M0.8 0.8L5.5 5.6L10.2 0.8" fill="none" stroke="#333" stroke-width="1.2"/></svg>
<svg style="left:781px;top:273px;" width="16" height="16" viewBox="0 0 16 16"><circle cx="3.2" cy="13" r="1.5" fill="#d9d9d9" stroke="#999" stroke-width="0.9"/><circle cx="5.8" cy="5.8" r="1.5" fill="#d9d9d9" stroke="#999" stroke-width="0.9"/><circle cx="14" cy="2.6" r="1.5" fill="#d9d9d9" stroke="#999" stroke-width="0.9"/></svg>
<div class="t" style="left:803.10px;top:276px;font-size:13px;color:#111;letter-spacing:-0.243px;">Funde_WT_2017_2019 [EPSG:4326]</div>
<div style="left:1381px;top:270px;width:24px;height:20px;background:#e1e1e1;border:1px solid #adadad;"></div>
<div style="left:1388.2px;top:283.2px;width:1.5px;height:1.7px;background:#222;"></div>
<div style="left:1392.2px;top:283.2px;width:1.5px;height:1.7px;background:#222;"></div>
<div style="left:1396.2px;top:283.2px;width:1.5px;height:1.7px;background:#222;"></div>
<div style="left:1412.5px;top:269.5px;width:25.0px;height:24.0px;background:#e1e1e1;border:1px solid #adadad;"></div>
<svg style="left:1417.5px;top:273.5px;" width="15" height="16" viewBox="0 0 15 16"><circle cx="7.6" cy="8.2" r="5.3" fill="#8fd684" stroke="#4da446" stroke-width="1.5"/><path d="M7.6 8.2L3.2 5.6A5.2 5.2 0 0 0 3.4 11.6Z" fill="#e3e3e3" opacity="0.55"/><path d="M2.2 6.2C5 3.6 9.5 4.4 10.6 7.6" fill="none" stroke="#3d8f37" stroke-width="1.3"/><path d="M3.4 11.2L6.4 15.6L6.6 11.4Z" fill="#2f6f2b"/><circle cx="7.8" cy="8.4" r="1.6" fill="#c9f2c2"/></svg>
<svg style="left:775px;top:303px;" width="16" height="16" viewBox="0 0 16 16"><rect x="0.5" y="0.5" width="15" height="15" fill="#fff" stroke="#c8c8c8" stroke-width="1"/></svg>
<div class="t" style="left:797.10px;top:305px;font-size:13px;color:#8a8a8a;letter-spacing:-0.099px;">Nur gewählte Symbole</div>
<div style="left:764px;top:262.5px;width:255px;height:37.0px;border:3px solid #e6000e;"></div>
<div class="t" style="left:775.00px;top:330px;font-size:13px;color:#111;letter-spacing:-0.080px;">Layer überlagern</div>
<div style="left:775px;top:351px;width:599px;height:25.5px;background:#e1e1e1;border:1px solid #adadad;"></div>
<svg style="left:1357.4px;top:361.2px;" width="11" height="7" viewBox="0 0 11 7"><path d="M0.8 0.8L5.5 5.6L10.2 0.8" fill="none" stroke="#333" stroke-width="1.2"/></svg>
<svg style="left:780px;top:355px;" width="20" height="16" viewBox="0 0 20 16"><path d="M1.5 3.5C5 0.8 7.5 3.6 10.5 2.8S16 0.5 18.5 2.6V11.5C16 14 13 10.5 10 11.5S4 14.5 1.5 12.5Z" fill="#e9e9e9" stroke="#8f8f8f" stroke-width="1.2"/></svg>
<div class="t" style="left:803.10px;top:358px;font-size:13px;color:#111;letter-spacing:-0.189px;">WT_kleiner__669m_SW_shp [EPSG:25832]</div>
<div style="left:1381px;top:352px;width:24px;height:20px;background:#e1e1e1;border:1px solid #adadad;"></div>
<div style="left:1388.2px;top:365.2px;width:1.5px;height:1.7px;background:#222;"></div>
<div style="left:1392.2px;top:365.2px;width:1.5px;height:1.7px;background:#222;"></div>
<div style="left:1396.2px;top:365.2px;width:1.5px;height:1.7px;background:#222;"></div>
<div style="left:1412.5px;top:351.5px;width:25.0px;height:24.0px;background:#e1e1e1;border:1px solid #adadad;"></div>
<svg style="left:1417.5px;top:355.5px;" width="15" height="16" viewBox="0 0 15 16"><circle cx="7.6" cy="8.2" r="5.3" fill="#8fd684" stroke="#4da446" stroke-width="1.5"/><path d="M7.6 8.2L3.2 5.6A5.2 5.2 0 0 0 3.4 11.6Z" fill="#e3e3e3" opacity="0.55"/><path d="M2.2 6.2C5 3.6 9.5 4.4 10.6 7.6" fill="none" stroke="#3d8f37" stroke-width="1.3"/><path d="M3.4 11.2L6.4 15.6L6.6 11.4Z" fill="#2f6f2b"/><circle cx="7.8" cy="8.4" r="1.6" fill="#c9f2c2"/></svg>
<svg style="left:775px;top:384.5px;" width="16" height="16" viewBox="0 0 16 16"><rect x="0.5" y="0.5" width="15" height="15" fill="#fff" stroke="#333" stroke-width="1"/></svg>
<div class="t" style="left:797.10px;top:387px;font-size:13px;color:#111;letter-spacing:-0.099px;">Nur gewählte Symbole</div>
<div style="left:766px;top:345px;width:294px;height:33px;border:3px solid #e6000e;"></div>
<div class="t" style="left:775.00px;top:412px;font-size:13px;color:#111;letter-spacing:-0.040px;">Beizubehaltendes Eingabefelder (leer belassen, wenn alle Felder beibehalten werden sollen) [optional]</div>
<div style="left:775px;top:433px;width:632px;height:21.5px;background:#f0f0f0;border:1px solid #d0d0d0;"></div>
<div class="t" style="left:778.30px;top:438px;font-size:13px;color:#8c8c8c;letter-spacing:-0.107px;">0 Elemente ausgewählt</div>
<div style="left:1414px;top:434px;width:24px;height:19.5px;background:#e1e1e1;border:1px solid #adadad;"></div>
<div style="left:1421.2px;top:446.87px;width:1.5px;height:1.7px;background:#222;"></div>
<div style="left:1425.2px;top:446.87px;width:1.5px;height:1.7px;background:#222;"></div>
<div style="left:1429.2px;top:446.87px;width:1.5px;height:1.7px;background:#222;"></div>
<div class="t" style="left:775.00px;top:464px;font-size:13px;color:#111;letter-spacing:-0.032px;">Beizubehaltendes Überlagerungsfelder (leer belassen, wenn alle Felder beibehalten werden sollen) [optional]</div>
<div style="left:775px;top:485px;width:632px;height:21.5px;background:#f0f0f0;border:1px solid #d0d0d0;"></div>
<div class="t" style="left:778.30px;top:490px;font-size:13px;color:#8c8c8c;letter-spacing:-0.107px;">0 Elemente ausgewählt</div>
<div style="left:1414px;top:486px;width:24px;height:19.5px;background:#e1e1e1;border:1px solid #adadad;"></div>
<div style="left:1421.2px;top:498.87px;width:1.5px;height:1.7px;background:#222;"></div>
<div style="left:1425.2px;top:498.87px;width:1.5px;height:1.7px;background:#222;"></div>
<div style="left:1429.2px;top:498.87px;width:1.5px;height:1.7px;background:#222;"></div>
<svg style="left:779.5px;top:517px;" width="8" height="12" viewBox="0 0 8 12"><path d="M0.5 0.5L7.5 6L0.5 11.5Z" fill="#222"/></svg>
<div class="t" style="left:796.90px;top:517px;font-size:13px;color:#000;font-weight:700;letter-spacing:0.470px;">Fortgeschrittene Parameter</div>
<div class="t" style="left:775.00px;top:545px;font-size:13px;color:#111;letter-spacing:-0.155px;">Verschneidung</div>
<div style="left:775px;top:566px;width:632px;height:21.5px;background:#fff;border:1px solid #7a7a7a;"></div>
<div class="t" style="left:778.30px;top:571px;font-size:13px;color:#111;letter-spacing:-0.103px;">D:/Science/_QGIS für Pilzfreunde/Shapes/WT/Funde_feucht_nass_wasser.shp</div>
<div style="left:1414px;top:567px;width:24px;height:19.5px;background:#e1e1e1;border:1px solid #adadad;"></div>
<div style="left:1421.2px;top:579.87px;width:1.5px;height:1.7px;background:#222;"></div>
<div style="left:1425.2px;top:579.87px;width:1.5px;height:1.7px;background:#222;"></div>
<div style="left:1429.2px;top:579.87px;width:1.5px;height:1.7px;background:#222;"></div>
<div style="left:763px;top:559px;width:490px;height:33.5px;border:3px solid #e6000e;"></div>
<svg style="left:775px;top:597px;" width="16" height="16" viewBox="0 0 16 16"><rect x="0.5" y="0.5" width="15" height="15" fill="#fff" stroke="#333" stroke-width="1"/><path d="M3 8.0L6.4 12L13.2 3.6" fill="none" stroke="#222" stroke-width="1.3"/></svg>
<div class="t" style="left:797.10px;top:599px;font-size:13px;color:#111;letter-spacing:-0.048px;">Öffne Ausgabedatei nach erfolgreicher Ausführung</div>
<svg style="left:776px;top:616px;" width="16" height="54" viewBox="0 0 16 54"><path d="M8.6 52.5V14" stroke="#e6000e" stroke-width="1.7" fill="none"/><path d="M8.6 1L14.2 18.6L8.6 15.4L3 18.6Z" fill="#e6000e"/></svg>
<div style="left:1463px;top:217.5px;width:256px;height:634px;background:#fff;border:1px solid #828282;"></div>
<div class="t" style="left:1468.50px;top:224px;font-size:20.5px;color:#4c4c4c;font-weight:700;letter-spacing:0.311px;">Verschneidung</div>
<div class="t" style="left:1468.50px;top:260px;font-size:13px;color:#6b6b6b;letter-spacing:-0.056px;">Diese Algorithmus extrahiert überlappende</div>
<div class="t" style="left:1468.50px;top:276px;font-size:13px;color:#6b6b6b;letter-spacing:-0.030px;">Teile von Objekt in dem Ein- und</div>
<div class="t" style="left:1468.50px;top:292px;font-size:13px;color:#6b6b6b;letter-spacing:-0.099px;">Überlagerungslayer. Den Objekten im</div>
<div class="t" style="left:1468.50px;top:308px;font-size:13px;color:#6b6b6b;letter-spacing:-0.032px;">Ausgabeschnittlayer werden die Attribute</div>
<div class="t" style="left:1468.50px;top:324px;font-size:13px;color:#6b6b6b;letter-spacing:-0.061px;">der überlappenden Objekte sowohl aus</div>
<div class="t" style="left:1468.50px;top:340px;font-size:13px;color:#6b6b6b;letter-spacing:-0.125px;">dem Ein- als auch dem Überlagerungslayer</div>
<div class="t" style="left:1468.50px;top:356px;font-size:13px;color:#6b6b6b;letter-spacing:-0.188px;">zugewiesen.</div>
<div style="left:769px;top:884px;width:810px;height:23.5px;background:#e6e6e6;border:1px solid #bcbcbc;"></div>
<div class="t" style="left:1589.50px;top:890px;font-size:13px;color:#111;letter-spacing:-0.245px;">0%</div>
<div style="left:1626px;top:883px;width:91.5px;height:25.5px;background:#cccccc;border:1px solid #bfbfbf;"></div>
<div class="t" style="left:1649.20px;top:890px;font-size:13px;color:#838383;letter-spacing:-0.231px;">Abbruch</div>
<div style="left:770px;top:918px;width:90px;height:25.5px;background:#e1e1e1;border:1px solid #adadad;"></div>
<div class="t" style="left:773.00px;top:925px;font-size:13px;color:#111;">Als Batch-Prozess starten…</div>
<div style="left:1427px;top:918px;width:91px;height:25.5px;background:#e5f1fb;border:1px solid #0078d7;"></div>
<div class="t" style="left:1455.50px;top:925px;font-size:13px;color:#111;letter-spacing:-0.064px;">Starte</div>
<div style="left:1527px;top:918px;width:90.5px;height:25.5px;background:#e1e1e1;border:1px solid #adadad;"></div>
<div class="t" style="left:1545.70px;top:925px;font-size:13px;color:#111;letter-spacing:-0.390px;">Schließen</div>
<div style="left:1626px;top:918px;width:91.5px;height:25.5px;background:#e1e1e1;border:1px solid #adadad;"></div>
<div class="t" style="left:1660.50px;top:925px;font-size:13px;color:#111;letter-spacing:-0.341px;">Hilfe</div>
<div style="left:817px;top:906px;width:181px;height:43.5px;background:#ffff7f;border-radius:9px;"></div>
<div class="t" style="left:867.50px;top:915px;font-size:24px;color:#000;font-weight:700;letter-spacing:-0.527px;">Bild 27</div>
<svg style="left:1502px;top:936.5px;" width="14" height="19" viewBox="0 0 14 19"><path d="M1 1V15.5L4.6 12.2L7.3 18L9.8 16.9L7.2 11.2L12.3 11Z" fill="#c800d8" stroke="#4a0a5a" stroke-width="1"/></svg>
<div style="left:1914px;top:0px;width:2px;height:75.5px;background:#161b27;"></div>
<div style="left:1914px;top:75.5px;width:2px;height:952px;background:#ababab;"></div>
<div style="left:1913px;top:64px;width:1px;height:932px;background:#fafafa;"></div>
</body></html>
